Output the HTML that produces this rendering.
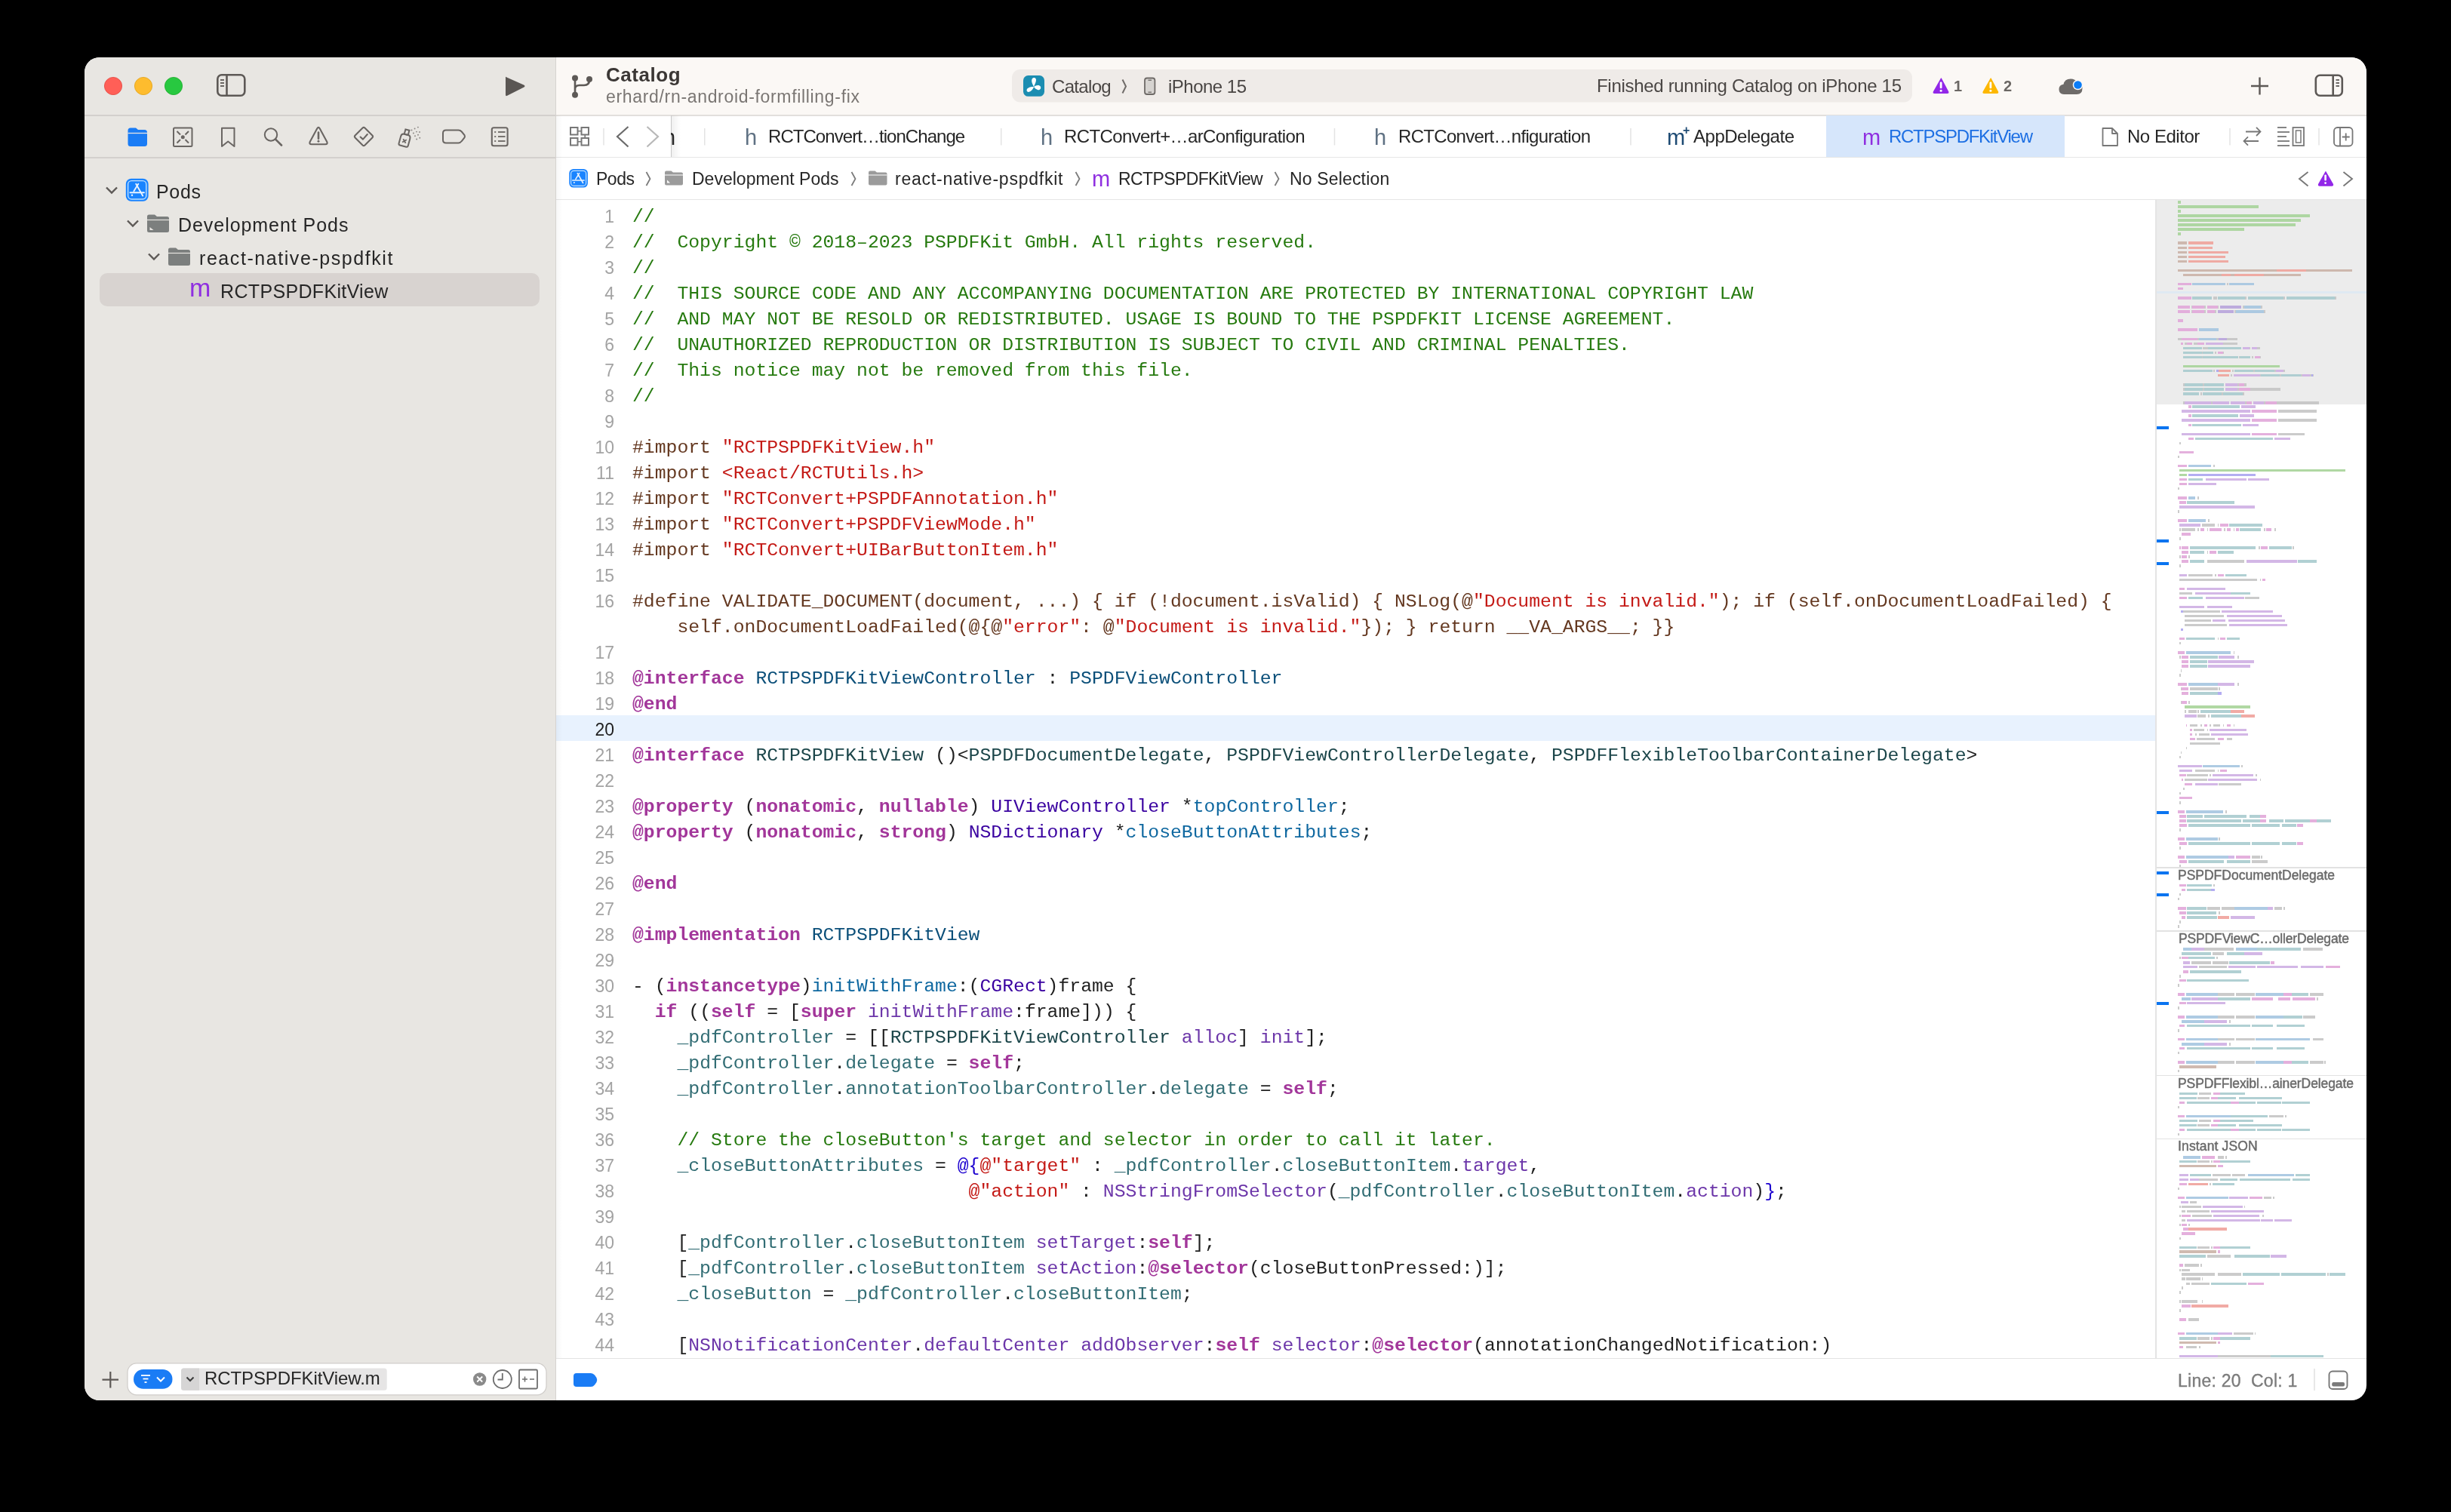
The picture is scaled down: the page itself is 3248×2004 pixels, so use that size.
<!DOCTYPE html>
<html><head><meta charset="utf-8">
<style>
*{margin:0;padding:0;box-sizing:border-box}
html,body{width:3248px;height:2004px;background:#000;overflow:hidden;font-family:"Liberation Sans",sans-serif}
.win{position:absolute;left:112px;top:76px;width:3024px;height:1780px;border-radius:20px;overflow:hidden;background:#fff}
.abs{position:absolute}
.side{position:absolute;left:0;top:0;width:624px;height:1780px;background:#e8e6e2}
.sidesep{position:absolute;left:624px;top:0;width:1px;height:1780px;background:#d6d3d0}
.hsep{position:absolute;height:1px}
.tb{position:absolute;left:625px;top:0;width:2399px;height:76px;background:#fbf8f5}
.t{position:absolute;white-space:pre;line-height:1;will-change:transform}
.cl{position:absolute;left:726px;height:34px;line-height:34px;font-family:"Liberation Mono",monospace;font-size:24.75px;white-space:pre;color:#1f1f1f;will-change:transform}
.ln{position:absolute;left:641.5px;width:60px;text-align:right;height:34px;line-height:34px;font-size:23px;color:#a3a3a3;font-family:"Liberation Sans",sans-serif;will-change:transform}
.ln.cur{color:#1f1f1f}
.c{color:#267a0f}.s{color:#c41a16}.p{color:#643820}.k{color:#a2369a;font-weight:bold}.t_{color:#0b4f79}
.pc{color:#1c464a}.o{color:#3900a0}.d{color:#0f68a0}.pv{color:#326d74}.of{color:#6c36a9}.n{color:#1c00cf}
.mm{position:absolute;left:2744px;top:189px;width:280px;height:1535px;overflow:hidden;background:#fff}
.mm i{position:absolute;height:3.6px;display:block;filter:blur(0.6px);opacity:.9}
.mmh{position:absolute;left:30px;font-size:17.5px;color:#6b6b6b;white-space:pre;line-height:1}
svg{position:absolute;overflow:visible}
</style></head><body>
<div class="win">
  <!-- sidebar -->
  <div class="side"></div>
  <div class="sidesep"></div>
  <!-- editor toolbar bg -->
  <div class="tb"></div>
  <!-- separators -->
  <div class="hsep" style="left:0;top:76px;width:624px;background:#d3d0cd;height:1.5px"></div>
  <div class="hsep" style="left:625px;top:76px;width:2399px;background:#e2dfdc;height:1.5px"></div>
  <div class="hsep" style="left:0;top:132px;width:624px;background:#d3d0cd;height:1.5px"></div>
  <div class="hsep" style="left:625px;top:132px;width:2399px;background:#e6e6e6"></div>
  <div class="hsep" style="left:625px;top:188px;width:2399px;background:#e6e6e6"></div>
  <div class="hsep" style="left:625px;top:1724px;width:2399px;background:#e3e3e3"></div>
<div class="abs" style="left:20.0px;top:286.0px;width:582.7px;height:43.7px;background:#d8d3d0;border-radius:10px"></div>
<div class="abs" style="left:2307.7px;top:77.0px;width:316.0px;height:55.0px;background:#d6e6fb"></div>
<div class="abs" style="left:625.0px;top:872.0px;width:2119.0px;height:34.0px;background:#e8f2fe"></div>
<div class="abs" style="left:777.0px;top:77.0px;width:1.0px;height:55.0px;background:#c9c9c9"></div>
<div class="abs" style="left:625.0px;top:77.0px;width:8.0px;height:1647.0px;background:linear-gradient(to right,rgba(0,0,0,0.035),rgba(0,0,0,0))"></div>
<div class="abs" style="left:778.0px;top:77.0px;width:12.0px;height:55.0px;background:linear-gradient(to right,rgba(0,0,0,0.06),rgba(0,0,0,0))"></div>
<div class="ln" style="top:193.5px">1</div>
<div class="ln" style="top:227.5px">2</div>
<div class="ln" style="top:261.5px">3</div>
<div class="ln" style="top:295.5px">4</div>
<div class="ln" style="top:329.5px">5</div>
<div class="ln" style="top:363.5px">6</div>
<div class="ln" style="top:397.5px">7</div>
<div class="ln" style="top:431.5px">8</div>
<div class="ln" style="top:465.5px">9</div>
<div class="ln" style="top:499.5px">10</div>
<div class="ln" style="top:533.5px">11</div>
<div class="ln" style="top:567.5px">12</div>
<div class="ln" style="top:601.5px">13</div>
<div class="ln" style="top:635.5px">14</div>
<div class="ln" style="top:669.5px">15</div>
<div class="ln" style="top:703.5px">16</div>
<div class="ln" style="top:771.5px">17</div>
<div class="ln" style="top:805.5px">18</div>
<div class="ln" style="top:839.5px">19</div>
<div class="ln cur" style="top:873.5px">20</div>
<div class="ln" style="top:907.5px">21</div>
<div class="ln" style="top:941.5px">22</div>
<div class="ln" style="top:975.5px">23</div>
<div class="ln" style="top:1009.5px">24</div>
<div class="ln" style="top:1043.5px">25</div>
<div class="ln" style="top:1077.5px">26</div>
<div class="ln" style="top:1111.5px">27</div>
<div class="ln" style="top:1145.5px">28</div>
<div class="ln" style="top:1179.5px">29</div>
<div class="ln" style="top:1213.5px">30</div>
<div class="ln" style="top:1247.5px">31</div>
<div class="ln" style="top:1281.5px">32</div>
<div class="ln" style="top:1315.5px">33</div>
<div class="ln" style="top:1349.5px">34</div>
<div class="ln" style="top:1383.5px">35</div>
<div class="ln" style="top:1417.5px">36</div>
<div class="ln" style="top:1451.5px">37</div>
<div class="ln" style="top:1485.5px">38</div>
<div class="ln" style="top:1519.5px">39</div>
<div class="ln" style="top:1553.5px">40</div>
<div class="ln" style="top:1587.5px">41</div>
<div class="ln" style="top:1621.5px">42</div>
<div class="ln" style="top:1655.5px">43</div>
<div class="ln" style="top:1689.5px">44</div>
<div class="cl" style="top:194.0px"><span class="c">//</span></div>
<div class="cl" style="top:228.0px"><span class="c">//  Copyright © 2018–2023 PSPDFKit GmbH. All rights reserved.</span></div>
<div class="cl" style="top:262.0px"><span class="c">//</span></div>
<div class="cl" style="top:296.0px"><span class="c">//  THIS SOURCE CODE AND ANY ACCOMPANYING DOCUMENTATION ARE PROTECTED BY INTERNATIONAL COPYRIGHT LAW</span></div>
<div class="cl" style="top:330.0px"><span class="c">//  AND MAY NOT BE RESOLD OR REDISTRIBUTED. USAGE IS BOUND TO THE PSPDFKIT LICENSE AGREEMENT.</span></div>
<div class="cl" style="top:364.0px"><span class="c">//  UNAUTHORIZED REPRODUCTION OR DISTRIBUTION IS SUBJECT TO CIVIL AND CRIMINAL PENALTIES.</span></div>
<div class="cl" style="top:398.0px"><span class="c">//  This notice may not be removed from this file.</span></div>
<div class="cl" style="top:432.0px"><span class="c">//</span></div>
<div class="cl" style="top:466.0px"></div>
<div class="cl" style="top:500.0px"><span class="p">#import </span><span class="s">&quot;RCTPSPDFKitView.h&quot;</span></div>
<div class="cl" style="top:534.0px"><span class="p">#import </span><span class="s">&lt;React/RCTUtils.h&gt;</span></div>
<div class="cl" style="top:568.0px"><span class="p">#import </span><span class="s">&quot;RCTConvert+PSPDFAnnotation.h&quot;</span></div>
<div class="cl" style="top:602.0px"><span class="p">#import </span><span class="s">&quot;RCTConvert+PSPDFViewMode.h&quot;</span></div>
<div class="cl" style="top:636.0px"><span class="p">#import </span><span class="s">&quot;RCTConvert+UIBarButtonItem.h&quot;</span></div>
<div class="cl" style="top:670.0px"></div>
<div class="cl" style="top:704.0px"><span class="p">#define VALIDATE_DOCUMENT(document, ...) { if (!document.isValid) { NSLog(@</span><span class="s">&quot;Document is invalid.&quot;</span><span class="p">); if (self.onDocumentLoadFailed) {</span></div>
<div class="cl" style="top:738.0px"><span class="p">    self.onDocumentLoadFailed(@{@</span><span class="s">&quot;error&quot;</span><span class="p">: @</span><span class="s">&quot;Document is invalid.&quot;</span><span class="p">}); } return __VA_ARGS__; }}</span></div>
<div class="cl" style="top:772.0px"></div>
<div class="cl" style="top:806.0px"><span class="k">@interface</span> <span class="t_">RCTPSPDFKitViewController</span> : <span class="t_">PSPDFViewController</span></div>
<div class="cl" style="top:840.0px"><span class="k">@end</span></div>
<div class="cl" style="top:874.0px"></div>
<div class="cl" style="top:908.0px"><span class="k">@interface</span> <span class="pc">RCTPSPDFKitView</span> ()&lt;<span class="pc">PSPDFDocumentDelegate</span>, <span class="pc">PSPDFViewControllerDelegate</span>, <span class="pc">PSPDFFlexibleToolbarContainerDelegate</span>&gt;</div>
<div class="cl" style="top:942.0px"></div>
<div class="cl" style="top:976.0px"><span class="k">@property</span> (<span class="k">nonatomic</span>, <span class="k">nullable</span>) <span class="o">UIViewController</span> *<span class="d">topController</span>;</div>
<div class="cl" style="top:1010.0px"><span class="k">@property</span> (<span class="k">nonatomic</span>, <span class="k">strong</span>) <span class="o">NSDictionary</span> *<span class="d">closeButtonAttributes</span>;</div>
<div class="cl" style="top:1044.0px"></div>
<div class="cl" style="top:1078.0px"><span class="k">@end</span></div>
<div class="cl" style="top:1112.0px"></div>
<div class="cl" style="top:1146.0px"><span class="k">@implementation</span> <span class="t_">RCTPSPDFKitView</span></div>
<div class="cl" style="top:1180.0px"></div>
<div class="cl" style="top:1214.0px">- (<span class="k">instancetype</span>)<span class="d">initWithFrame</span>:(<span class="o">CGRect</span>)frame {</div>
<div class="cl" style="top:1248.0px">  <span class="k">if</span> ((<span class="k">self</span> = [<span class="k">super</span> <span class="of">initWithFrame</span>:frame])) {</div>
<div class="cl" style="top:1282.0px">    <span class="pv">_pdfController</span> = [[<span class="pc">RCTPSPDFKitViewController</span> <span class="of">alloc</span>] <span class="of">init</span>];</div>
<div class="cl" style="top:1316.0px">    <span class="pv">_pdfController</span>.<span class="pv">delegate</span> = <span class="k">self</span>;</div>
<div class="cl" style="top:1350.0px">    <span class="pv">_pdfController</span>.<span class="pv">annotationToolbarController</span>.<span class="pv">delegate</span> = <span class="k">self</span>;</div>
<div class="cl" style="top:1384.0px"></div>
<div class="cl" style="top:1418.0px">    <span class="c">// Store the closeButton&#x27;s target and selector in order to call it later.</span></div>
<div class="cl" style="top:1452.0px">    <span class="pv">_closeButtonAttributes</span> = <span class="n">@{</span><span class="s">@&quot;target&quot;</span> : <span class="pv">_pdfController</span>.<span class="pv">closeButtonItem</span>.<span class="of">target</span>,</div>
<div class="cl" style="top:1486.0px">                              <span class="s">@&quot;action&quot;</span> : <span class="of">NSStringFromSelector</span>(<span class="pv">_pdfController</span>.<span class="pv">closeButtonItem</span>.<span class="of">action</span>)<span class="n">}</span>;</div>
<div class="cl" style="top:1520.0px"></div>
<div class="cl" style="top:1554.0px">    [<span class="pv">_pdfController</span>.<span class="pv">closeButtonItem</span> <span class="of">setTarget</span>:<span class="k">self</span>];</div>
<div class="cl" style="top:1588.0px">    [<span class="pv">_pdfController</span>.<span class="pv">closeButtonItem</span> <span class="of">setAction</span>:<span class="k">@selector</span>(closeButtonPressed:)];</div>
<div class="cl" style="top:1622.0px">    <span class="pv">_closeButton</span> = <span class="pv">_pdfController</span>.<span class="pv">closeButtonItem</span>;</div>
<div class="cl" style="top:1656.0px"></div>
<div class="cl" style="top:1690.0px">    [<span class="of">NSNotificationCenter</span>.<span class="of">defaultCenter</span> <span class="of">addObserver</span>:<span class="k">self</span> <span class="of">selector</span>:<span class="k">@selector</span>(annotationChangedNotification:)</div>
<div class="t" style="left:874.5px;top:91.5px;font-size:29px;color:#5f7183;font-weight:400">h</div>
<div class="t" style="left:1266.5px;top:91.5px;font-size:29px;color:#5f7183;font-weight:400">h</div>
<div class="t" style="left:1708.5px;top:91.5px;font-size:29px;color:#5f7183;font-weight:400">h</div>
<div class="t" style="left:2097.0px;top:91.5px;font-size:29px;color:#1d4a73;font-weight:400">m</div>
<div class="t" style="left:2118.0px;top:88.5px;font-size:16px;color:#1d4a73;font-weight:700">+</div>
<div class="t" style="left:2355.5px;top:91.5px;font-size:29px;color:#8f2fe0;font-weight:400">m</div>
<div class="t" style="left:1334.5px;top:146.5px;font-size:29px;color:#8f2fe0;font-weight:400">m</div>
<div class="t" style="left:139.0px;top:287.7px;font-size:34px;color:#8f2fe0;font-weight:400">m</div>
<div class="abs" style="left:777px;top:89px;width:5px;height:30px;overflow:hidden"><div class="t" style="left:-10px;top:3px;font-size:29px;color:#262626">h</div></div>
<div class="mm">
<div class="abs" style="left:0;top:0;width:2px;height:1535px;background:#e4e4e4"></div>
<div class="abs" style="left:2px;top:0;width:278px;height:271px;background:#ececec"></div>
<div class="abs" style="left:2px;top:121px;width:278px;height:3px;background:#dfe9f2"></div>
<i style="left:30.0px;top:1.0px;width:3.5px;background:#a8d49a"></i>
<i style="left:30.0px;top:7.1px;width:106.8px;background:#a8d49a"></i>
<i style="left:30.0px;top:13.1px;width:3.5px;background:#a8d49a"></i>
<i style="left:30.0px;top:19.1px;width:175.0px;background:#a8d49a"></i>
<i style="left:30.0px;top:25.2px;width:162.8px;background:#a8d49a"></i>
<i style="left:30.0px;top:31.2px;width:155.8px;background:#a8d49a"></i>
<i style="left:30.0px;top:37.3px;width:87.5px;background:#a8d49a"></i>
<i style="left:30.0px;top:43.4px;width:3.5px;background:#a8d49a"></i>
<i style="left:30.0px;top:55.4px;width:12.2px;background:#cbb3a8"></i>
<i style="left:44.0px;top:55.4px;width:33.2px;background:#f0a39c"></i>
<i style="left:30.0px;top:61.5px;width:12.2px;background:#cbb3a8"></i>
<i style="left:44.0px;top:61.5px;width:31.5px;background:#f0a39c"></i>
<i style="left:30.0px;top:67.6px;width:12.2px;background:#cbb3a8"></i>
<i style="left:44.0px;top:67.6px;width:52.5px;background:#f0a39c"></i>
<i style="left:30.0px;top:73.6px;width:12.2px;background:#cbb3a8"></i>
<i style="left:44.0px;top:73.6px;width:49.0px;background:#f0a39c"></i>
<i style="left:30.0px;top:79.6px;width:12.2px;background:#cbb3a8"></i>
<i style="left:44.0px;top:79.6px;width:52.5px;background:#f0a39c"></i>
<i style="left:30.0px;top:91.8px;width:131.2px;background:#cbb3a8"></i>
<i style="left:161.2px;top:91.8px;width:38.5px;background:#f0a39c"></i>
<i style="left:199.8px;top:91.8px;width:61.2px;background:#cbb3a8"></i>
<i style="left:37.0px;top:97.8px;width:50.8px;background:#cbb3a8"></i>
<i style="left:87.8px;top:97.8px;width:12.2px;background:#f0a39c"></i>
<i style="left:100.0px;top:97.8px;width:5.2px;background:#cbb3a8"></i>
<i style="left:105.2px;top:97.8px;width:38.5px;background:#f0a39c"></i>
<i style="left:143.8px;top:97.8px;width:49.0px;background:#cbb3a8"></i>
<i style="left:30.0px;top:109.9px;width:17.5px;background:#e2a8da"></i>
<i style="left:49.2px;top:109.9px;width:43.8px;background:#a6c6e0"></i>
<i style="left:94.8px;top:109.9px;width:1.8px;background:#c6c6c6"></i>
<i style="left:98.2px;top:109.9px;width:33.2px;background:#a6c6e0"></i>
<i style="left:30.0px;top:115.9px;width:7.0px;background:#e2a8da"></i>
<i style="left:30.0px;top:128.1px;width:17.5px;background:#e2a8da"></i>
<i style="left:49.2px;top:128.1px;width:26.2px;background:#a9cbcf"></i>
<i style="left:77.2px;top:128.1px;width:5.2px;background:#c6c6c6"></i>
<i style="left:82.5px;top:128.1px;width:36.8px;background:#a9cbcf"></i>
<i style="left:119.2px;top:128.1px;width:1.8px;background:#c6c6c6"></i>
<i style="left:122.8px;top:128.1px;width:47.2px;background:#a9cbcf"></i>
<i style="left:170.0px;top:128.1px;width:1.8px;background:#c6c6c6"></i>
<i style="left:173.5px;top:128.1px;width:64.8px;background:#a9cbcf"></i>
<i style="left:238.2px;top:128.1px;width:1.8px;background:#c6c6c6"></i>
<i style="left:30.0px;top:140.1px;width:15.8px;background:#e2a8da"></i>
<i style="left:47.5px;top:140.1px;width:1.8px;background:#c6c6c6"></i>
<i style="left:49.2px;top:140.1px;width:15.8px;background:#e2a8da"></i>
<i style="left:65.0px;top:140.1px;width:1.8px;background:#c6c6c6"></i>
<i style="left:68.5px;top:140.1px;width:14.0px;background:#e2a8da"></i>
<i style="left:82.5px;top:140.1px;width:1.8px;background:#c6c6c6"></i>
<i style="left:86.0px;top:140.1px;width:28.0px;background:#b9a5dc"></i>
<i style="left:115.8px;top:140.1px;width:1.8px;background:#c6c6c6"></i>
<i style="left:117.5px;top:140.1px;width:22.8px;background:#a6c6e0"></i>
<i style="left:140.2px;top:140.1px;width:1.8px;background:#c6c6c6"></i>
<i style="left:30.0px;top:146.2px;width:15.8px;background:#e2a8da"></i>
<i style="left:47.5px;top:146.2px;width:1.8px;background:#c6c6c6"></i>
<i style="left:49.2px;top:146.2px;width:15.8px;background:#e2a8da"></i>
<i style="left:65.0px;top:146.2px;width:1.8px;background:#c6c6c6"></i>
<i style="left:68.5px;top:146.2px;width:10.5px;background:#e2a8da"></i>
<i style="left:79.0px;top:146.2px;width:1.8px;background:#c6c6c6"></i>
<i style="left:82.5px;top:146.2px;width:21.0px;background:#b9a5dc"></i>
<i style="left:105.2px;top:146.2px;width:1.8px;background:#c6c6c6"></i>
<i style="left:107.0px;top:146.2px;width:36.8px;background:#a6c6e0"></i>
<i style="left:143.8px;top:146.2px;width:1.8px;background:#c6c6c6"></i>
<i style="left:30.0px;top:158.3px;width:7.0px;background:#e2a8da"></i>
<i style="left:30.0px;top:170.4px;width:26.2px;background:#e2a8da"></i>
<i style="left:58.0px;top:170.4px;width:26.2px;background:#a6c6e0"></i>
<i style="left:30.0px;top:182.5px;width:5.2px;background:#c6c6c6"></i>
<i style="left:35.2px;top:182.5px;width:21.0px;background:#e2a8da"></i>
<i style="left:56.2px;top:182.5px;width:1.8px;background:#c6c6c6"></i>
<i style="left:58.0px;top:182.5px;width:22.8px;background:#a6c6e0"></i>
<i style="left:80.8px;top:182.5px;width:3.5px;background:#c6c6c6"></i>
<i style="left:84.2px;top:182.5px;width:10.5px;background:#b9a5dc"></i>
<i style="left:94.8px;top:182.5px;width:14.0px;background:#c6c6c6"></i>
<i style="left:33.5px;top:188.5px;width:3.5px;background:#e2a8da"></i>
<i style="left:38.8px;top:188.5px;width:3.5px;background:#c6c6c6"></i>
<i style="left:42.2px;top:188.5px;width:7.0px;background:#e2a8da"></i>
<i style="left:51.0px;top:188.5px;width:5.2px;background:#c6c6c6"></i>
<i style="left:56.2px;top:188.5px;width:8.8px;background:#e2a8da"></i>
<i style="left:66.8px;top:188.5px;width:22.8px;background:#cfb0e4"></i>
<i style="left:89.5px;top:188.5px;width:19.2px;background:#c6c6c6"></i>
<i style="left:37.0px;top:194.6px;width:24.5px;background:#a9cbcf"></i>
<i style="left:63.2px;top:194.6px;width:7.0px;background:#c6c6c6"></i>
<i style="left:70.2px;top:194.6px;width:43.8px;background:#a9cbcf"></i>
<i style="left:115.8px;top:194.6px;width:8.8px;background:#cfb0e4"></i>
<i style="left:124.5px;top:194.6px;width:1.8px;background:#c6c6c6"></i>
<i style="left:128.0px;top:194.6px;width:7.0px;background:#cfb0e4"></i>
<i style="left:135.0px;top:194.6px;width:3.5px;background:#c6c6c6"></i>
<i style="left:37.0px;top:200.6px;width:24.5px;background:#a9cbcf"></i>
<i style="left:61.5px;top:200.6px;width:1.8px;background:#c6c6c6"></i>
<i style="left:63.2px;top:200.6px;width:14.0px;background:#a9cbcf"></i>
<i style="left:79.0px;top:200.6px;width:1.8px;background:#c6c6c6"></i>
<i style="left:82.5px;top:200.6px;width:7.0px;background:#e2a8da"></i>
<i style="left:89.5px;top:200.6px;width:1.8px;background:#c6c6c6"></i>
<i style="left:37.0px;top:206.7px;width:24.5px;background:#a9cbcf"></i>
<i style="left:61.5px;top:206.7px;width:1.8px;background:#c6c6c6"></i>
<i style="left:63.2px;top:206.7px;width:47.2px;background:#a9cbcf"></i>
<i style="left:110.5px;top:206.7px;width:1.8px;background:#c6c6c6"></i>
<i style="left:112.2px;top:206.7px;width:14.0px;background:#a9cbcf"></i>
<i style="left:128.0px;top:206.7px;width:1.8px;background:#c6c6c6"></i>
<i style="left:131.5px;top:206.7px;width:7.0px;background:#e2a8da"></i>
<i style="left:138.5px;top:206.7px;width:1.8px;background:#c6c6c6"></i>
<i style="left:37.0px;top:218.8px;width:127.8px;background:#a8d49a"></i>
<i style="left:37.0px;top:224.9px;width:38.5px;background:#a9cbcf"></i>
<i style="left:77.2px;top:224.9px;width:1.8px;background:#c6c6c6"></i>
<i style="left:80.8px;top:224.9px;width:3.5px;background:#aba5f0"></i>
<i style="left:84.2px;top:224.9px;width:15.8px;background:#f0a39c"></i>
<i style="left:101.8px;top:224.9px;width:1.8px;background:#c6c6c6"></i>
<i style="left:105.2px;top:224.9px;width:24.5px;background:#a9cbcf"></i>
<i style="left:129.8px;top:224.9px;width:1.8px;background:#c6c6c6"></i>
<i style="left:131.5px;top:224.9px;width:26.2px;background:#a9cbcf"></i>
<i style="left:157.8px;top:224.9px;width:1.8px;background:#c6c6c6"></i>
<i style="left:159.5px;top:224.9px;width:10.5px;background:#cfb0e4"></i>
<i style="left:170.0px;top:224.9px;width:1.8px;background:#c6c6c6"></i>
<i style="left:82.5px;top:230.9px;width:15.8px;background:#f0a39c"></i>
<i style="left:100.0px;top:230.9px;width:1.8px;background:#c6c6c6"></i>
<i style="left:103.5px;top:230.9px;width:35.0px;background:#cfb0e4"></i>
<i style="left:138.5px;top:230.9px;width:1.8px;background:#c6c6c6"></i>
<i style="left:140.2px;top:230.9px;width:24.5px;background:#a9cbcf"></i>
<i style="left:164.8px;top:230.9px;width:1.8px;background:#c6c6c6"></i>
<i style="left:166.5px;top:230.9px;width:26.2px;background:#a9cbcf"></i>
<i style="left:192.8px;top:230.9px;width:1.8px;background:#c6c6c6"></i>
<i style="left:194.5px;top:230.9px;width:10.5px;background:#cfb0e4"></i>
<i style="left:205.0px;top:230.9px;width:1.8px;background:#c6c6c6"></i>
<i style="left:206.8px;top:230.9px;width:1.8px;background:#aba5f0"></i>
<i style="left:208.5px;top:230.9px;width:1.8px;background:#c6c6c6"></i>
<i style="left:37.0px;top:243.0px;width:1.8px;background:#c6c6c6"></i>
<i style="left:38.8px;top:243.0px;width:24.5px;background:#a9cbcf"></i>
<i style="left:63.2px;top:243.0px;width:1.8px;background:#c6c6c6"></i>
<i style="left:65.0px;top:243.0px;width:26.2px;background:#a9cbcf"></i>
<i style="left:93.0px;top:243.0px;width:15.8px;background:#cfb0e4"></i>
<i style="left:108.8px;top:243.0px;width:1.8px;background:#c6c6c6"></i>
<i style="left:110.5px;top:243.0px;width:7.0px;background:#e2a8da"></i>
<i style="left:117.5px;top:243.0px;width:3.5px;background:#c6c6c6"></i>
<i style="left:37.0px;top:249.0px;width:1.8px;background:#c6c6c6"></i>
<i style="left:38.8px;top:249.0px;width:24.5px;background:#a9cbcf"></i>
<i style="left:63.2px;top:249.0px;width:1.8px;background:#c6c6c6"></i>
<i style="left:65.0px;top:249.0px;width:26.2px;background:#a9cbcf"></i>
<i style="left:93.0px;top:249.0px;width:15.8px;background:#cfb0e4"></i>
<i style="left:108.8px;top:249.0px;width:1.8px;background:#c6c6c6"></i>
<i style="left:110.5px;top:249.0px;width:15.8px;background:#e2a8da"></i>
<i style="left:126.2px;top:249.0px;width:40.2px;background:#c6c6c6"></i>
<i style="left:37.0px;top:255.1px;width:21.0px;background:#a9cbcf"></i>
<i style="left:59.8px;top:255.1px;width:1.8px;background:#c6c6c6"></i>
<i style="left:63.2px;top:255.1px;width:24.5px;background:#a9cbcf"></i>
<i style="left:87.8px;top:255.1px;width:1.8px;background:#c6c6c6"></i>
<i style="left:89.5px;top:255.1px;width:26.2px;background:#a9cbcf"></i>
<i style="left:115.8px;top:255.1px;width:1.8px;background:#c6c6c6"></i>
<i style="left:37.0px;top:267.2px;width:1.8px;background:#c6c6c6"></i>
<i style="left:38.8px;top:267.2px;width:35.0px;background:#cfb0e4"></i>
<i style="left:73.8px;top:267.2px;width:1.8px;background:#c6c6c6"></i>
<i style="left:75.5px;top:267.2px;width:22.8px;background:#cfb0e4"></i>
<i style="left:100.0px;top:267.2px;width:19.2px;background:#cfb0e4"></i>
<i style="left:119.2px;top:267.2px;width:1.8px;background:#c6c6c6"></i>
<i style="left:121.0px;top:267.2px;width:7.0px;background:#e2a8da"></i>
<i style="left:129.8px;top:267.2px;width:14.0px;background:#cfb0e4"></i>
<i style="left:143.8px;top:267.2px;width:1.8px;background:#c6c6c6"></i>
<i style="left:145.5px;top:267.2px;width:15.8px;background:#e2a8da"></i>
<i style="left:161.2px;top:267.2px;width:56.0px;background:#c6c6c6"></i>
<i style="left:44.0px;top:272.4px;width:3.5px;background:#e2a8da"></i>
<i style="left:49.2px;top:272.4px;width:63.0px;background:#a9cbcf"></i>
<i style="left:114.0px;top:272.4px;width:19.2px;background:#cfb0e4"></i>
<i style="left:35.2px;top:278.4px;width:91.0px;background:#cfb0e4"></i>
<i style="left:128.0px;top:278.4px;width:33.2px;background:#e2a8da"></i>
<i style="left:163.0px;top:278.4px;width:50.8px;background:#c6c6c6"></i>
<i style="left:44.0px;top:284.4px;width:3.5px;background:#e2a8da"></i>
<i style="left:49.2px;top:284.4px;width:61.2px;background:#a9cbcf"></i>
<i style="left:112.2px;top:284.4px;width:19.2px;background:#cfb0e4"></i>
<i style="left:35.2px;top:290.4px;width:91.0px;background:#cfb0e4"></i>
<i style="left:128.0px;top:290.4px;width:33.2px;background:#e2a8da"></i>
<i style="left:163.0px;top:290.4px;width:50.8px;background:#c6c6c6"></i>
<i style="left:44.0px;top:296.5px;width:3.5px;background:#e2a8da"></i>
<i style="left:49.2px;top:296.5px;width:64.8px;background:#a9cbcf"></i>
<i style="left:115.8px;top:296.5px;width:21.0px;background:#cfb0e4"></i>
<i style="left:35.2px;top:308.5px;width:91.0px;background:#cfb0e4"></i>
<i style="left:128.0px;top:308.5px;width:33.2px;background:#e2a8da"></i>
<i style="left:163.0px;top:308.5px;width:35.0px;background:#c6c6c6"></i>
<i style="left:44.0px;top:314.6px;width:7.0px;background:#e2a8da"></i>
<i style="left:52.8px;top:314.6px;width:103.2px;background:#a9cbcf"></i>
<i style="left:157.8px;top:314.6px;width:21.0px;background:#cfb0e4"></i>
<i style="left:31.8px;top:320.6px;width:1.8px;background:#c6c6c6"></i>
<i style="left:31.8px;top:332.7px;width:19.2px;background:#e2a8da"></i>
<i style="left:30.0px;top:338.7px;width:1.8px;background:#c6c6c6"></i>
<i style="left:30.0px;top:350.7px;width:12.2px;background:#e2a8da"></i>
<i style="left:44.0px;top:350.7px;width:29.8px;background:#a6c6e0"></i>
<i style="left:77.2px;top:350.7px;width:1.8px;background:#c6c6c6"></i>
<i style="left:31.8px;top:356.8px;width:220.5px;background:#a8d49a"></i>
<i style="left:31.8px;top:362.8px;width:10.5px;background:#a8d49a"></i>
<i style="left:44.0px;top:362.8px;width:89.2px;background:#aba5f0"></i>
<i style="left:31.8px;top:368.8px;width:10.5px;background:#e2a8da"></i>
<i style="left:44.0px;top:368.8px;width:19.2px;background:#a9cbcf"></i>
<i style="left:66.8px;top:368.8px;width:54.2px;background:#cfb0e4"></i>
<i style="left:122.8px;top:368.8px;width:28.0px;background:#cfb0e4"></i>
<i style="left:31.8px;top:374.9px;width:10.5px;background:#e2a8da"></i>
<i style="left:44.0px;top:374.9px;width:36.8px;background:#cfb0e4"></i>
<i style="left:30.0px;top:380.9px;width:1.8px;background:#c6c6c6"></i>
<i style="left:30.0px;top:393.0px;width:12.2px;background:#e2a8da"></i>
<i style="left:44.0px;top:393.0px;width:8.8px;background:#a6c6e0"></i>
<i style="left:56.2px;top:393.0px;width:1.8px;background:#c6c6c6"></i>
<i style="left:31.8px;top:399.0px;width:8.8px;background:#e2a8da"></i>
<i style="left:42.2px;top:399.0px;width:63.0px;background:#a9cbcf"></i>
<i style="left:31.8px;top:405.0px;width:99.8px;background:#cfb0e4"></i>
<i style="left:30.0px;top:411.0px;width:1.8px;background:#c6c6c6"></i>
<i style="left:30.0px;top:423.1px;width:12.2px;background:#e2a8da"></i>
<i style="left:44.0px;top:423.1px;width:22.8px;background:#a6c6e0"></i>
<i style="left:70.2px;top:423.1px;width:1.8px;background:#c6c6c6"></i>
<i style="left:31.8px;top:429.1px;width:28.0px;background:#cfb0e4"></i>
<i style="left:61.5px;top:429.1px;width:17.5px;background:#c6c6c6"></i>
<i style="left:82.5px;top:429.1px;width:1.8px;background:#c6c6c6"></i>
<i style="left:86.0px;top:429.1px;width:10.5px;background:#e2a8da"></i>
<i style="left:98.2px;top:429.1px;width:43.8px;background:#a9cbcf"></i>
<i style="left:31.8px;top:435.2px;width:1.8px;background:#c6c6c6"></i>
<i style="left:35.2px;top:435.2px;width:17.5px;background:#c6c6c6"></i>
<i style="left:56.2px;top:435.2px;width:1.8px;background:#c6c6c6"></i>
<i style="left:59.8px;top:435.2px;width:5.2px;background:#e2a8da"></i>
<i style="left:68.5px;top:435.2px;width:1.8px;background:#c6c6c6"></i>
<i style="left:72.0px;top:435.2px;width:15.8px;background:#e2a8da"></i>
<i style="left:91.2px;top:435.2px;width:1.8px;background:#c6c6c6"></i>
<i style="left:94.8px;top:435.2px;width:5.2px;background:#e2a8da"></i>
<i style="left:103.5px;top:435.2px;width:1.8px;background:#c6c6c6"></i>
<i style="left:107.0px;top:435.2px;width:3.5px;background:#e2a8da"></i>
<i style="left:112.2px;top:435.2px;width:28.0px;background:#a9cbcf"></i>
<i style="left:143.8px;top:435.2px;width:1.8px;background:#c6c6c6"></i>
<i style="left:147.2px;top:435.2px;width:7.0px;background:#e2a8da"></i>
<i style="left:157.8px;top:435.2px;width:1.8px;background:#c6c6c6"></i>
<i style="left:35.2px;top:441.2px;width:12.2px;background:#e2a8da"></i>
<i style="left:31.8px;top:447.2px;width:1.8px;background:#c6c6c6"></i>
<i style="left:31.8px;top:459.3px;width:1.8px;background:#e2a8da"></i>
<i style="left:35.2px;top:459.3px;width:8.8px;background:#e2a8da"></i>
<i style="left:45.8px;top:459.3px;width:87.5px;background:#a9cbcf"></i>
<i style="left:136.8px;top:459.3px;width:1.8px;background:#c6c6c6"></i>
<i style="left:140.2px;top:459.3px;width:8.8px;background:#e2a8da"></i>
<i style="left:150.8px;top:459.3px;width:29.8px;background:#a9cbcf"></i>
<i style="left:182.2px;top:459.3px;width:1.8px;background:#c6c6c6"></i>
<i style="left:35.2px;top:465.3px;width:8.8px;background:#e2a8da"></i>
<i style="left:45.8px;top:465.3px;width:19.2px;background:#a9cbcf"></i>
<i style="left:68.5px;top:465.3px;width:1.8px;background:#c6c6c6"></i>
<i style="left:72.0px;top:465.3px;width:8.8px;background:#e2a8da"></i>
<i style="left:82.5px;top:465.3px;width:21.0px;background:#a9cbcf"></i>
<i style="left:31.8px;top:471.3px;width:1.8px;background:#c6c6c6"></i>
<i style="left:35.2px;top:471.3px;width:7.0px;background:#e2a8da"></i>
<i style="left:44.0px;top:471.3px;width:1.8px;background:#c6c6c6"></i>
<i style="left:35.2px;top:477.4px;width:8.8px;background:#e2a8da"></i>
<i style="left:45.8px;top:477.4px;width:19.2px;background:#a9cbcf"></i>
<i style="left:68.5px;top:477.4px;width:49.0px;background:#c6c6c6"></i>
<i style="left:121.0px;top:477.4px;width:66.5px;background:#cfb0e4"></i>
<i style="left:189.2px;top:477.4px;width:24.5px;background:#a9cbcf"></i>
<i style="left:31.8px;top:483.4px;width:1.8px;background:#c6c6c6"></i>
<i style="left:31.8px;top:495.5px;width:10.5px;background:#cfb0e4"></i>
<i style="left:44.0px;top:495.5px;width:31.5px;background:#c6c6c6"></i>
<i style="left:79.0px;top:495.5px;width:1.8px;background:#c6c6c6"></i>
<i style="left:82.5px;top:495.5px;width:8.8px;background:#e2a8da"></i>
<i style="left:93.0px;top:495.5px;width:28.0px;background:#a9cbcf"></i>
<i style="left:31.8px;top:501.5px;width:103.2px;background:#c6c6c6"></i>
<i style="left:138.5px;top:501.5px;width:1.8px;background:#c6c6c6"></i>
<i style="left:142.0px;top:501.5px;width:3.5px;background:#e2a8da"></i>
<i style="left:31.8px;top:513.6px;width:7.0px;background:#e2a8da"></i>
<i style="left:42.2px;top:513.6px;width:50.8px;background:#cfb0e4"></i>
<i style="left:31.8px;top:519.6px;width:17.5px;background:#c6c6c6"></i>
<i style="left:52.8px;top:519.6px;width:47.2px;background:#cfb0e4"></i>
<i style="left:100.0px;top:519.6px;width:26.2px;background:#a9cbcf"></i>
<i style="left:31.8px;top:525.6px;width:10.5px;background:#e2a8da"></i>
<i style="left:44.0px;top:525.6px;width:19.2px;background:#a9cbcf"></i>
<i style="left:66.8px;top:525.6px;width:50.8px;background:#cfb0e4"></i>
<i style="left:119.2px;top:525.6px;width:19.2px;background:#c6c6c6"></i>
<i style="left:31.8px;top:537.7px;width:33.2px;background:#cfb0e4"></i>
<i style="left:68.5px;top:537.7px;width:33.2px;background:#cfb0e4"></i>
<i style="left:33.5px;top:543.7px;width:3.5px;background:#aba5f0"></i>
<i style="left:37.0px;top:543.7px;width:49.0px;background:#c6c6c6"></i>
<i style="left:87.8px;top:543.7px;width:68.2px;background:#cfb0e4"></i>
<i style="left:38.8px;top:549.7px;width:52.5px;background:#c6c6c6"></i>
<i style="left:94.8px;top:549.7px;width:73.5px;background:#cfb0e4"></i>
<i style="left:38.8px;top:555.8px;width:35.0px;background:#c6c6c6"></i>
<i style="left:75.5px;top:555.8px;width:17.5px;background:#cfb0e4"></i>
<i style="left:96.5px;top:555.8px;width:75.2px;background:#cfb0e4"></i>
<i style="left:38.8px;top:561.8px;width:56.0px;background:#c6c6c6"></i>
<i style="left:98.2px;top:561.8px;width:77.0px;background:#cfb0e4"></i>
<i style="left:33.5px;top:567.8px;width:3.5px;background:#aba5f0"></i>
<i style="left:31.8px;top:579.9px;width:7.0px;background:#e2a8da"></i>
<i style="left:40.5px;top:579.9px;width:38.5px;background:#a9cbcf"></i>
<i style="left:82.5px;top:579.9px;width:1.8px;background:#c6c6c6"></i>
<i style="left:86.0px;top:579.9px;width:7.0px;background:#e2a8da"></i>
<i style="left:94.8px;top:579.9px;width:17.5px;background:#a9cbcf"></i>
<i style="left:31.8px;top:585.9px;width:1.8px;background:#c6c6c6"></i>
<i style="left:30.0px;top:598.0px;width:8.8px;background:#e2a8da"></i>
<i style="left:40.5px;top:598.0px;width:59.5px;background:#a6c6e0"></i>
<i style="left:103.5px;top:598.0px;width:1.8px;background:#c6c6c6"></i>
<i style="left:31.8px;top:604.0px;width:1.8px;background:#c6c6c6"></i>
<i style="left:35.2px;top:604.0px;width:8.8px;background:#e2a8da"></i>
<i style="left:45.8px;top:604.0px;width:36.8px;background:#a9cbcf"></i>
<i style="left:84.2px;top:604.0px;width:21.0px;background:#cfb0e4"></i>
<i style="left:108.8px;top:604.0px;width:1.8px;background:#c6c6c6"></i>
<i style="left:35.2px;top:610.0px;width:8.8px;background:#e2a8da"></i>
<i style="left:45.8px;top:610.0px;width:22.8px;background:#a9cbcf"></i>
<i style="left:70.2px;top:610.0px;width:61.2px;background:#cfb0e4"></i>
<i style="left:35.2px;top:616.1px;width:8.8px;background:#e2a8da"></i>
<i style="left:45.8px;top:616.1px;width:22.8px;background:#a9cbcf"></i>
<i style="left:70.2px;top:616.1px;width:56.0px;background:#cfb0e4"></i>
<i style="left:33.5px;top:622.1px;width:1.8px;background:#c6c6c6"></i>
<i style="left:31.8px;top:628.1px;width:1.8px;background:#c6c6c6"></i>
<i style="left:30.0px;top:640.2px;width:12.2px;background:#e2a8da"></i>
<i style="left:44.0px;top:640.2px;width:38.5px;background:#a6c6e0"></i>
<i style="left:82.5px;top:640.2px;width:22.8px;background:#cfb0e4"></i>
<i style="left:108.8px;top:640.2px;width:1.8px;background:#c6c6c6"></i>
<i style="left:33.5px;top:646.2px;width:1.8px;background:#c6c6c6"></i>
<i style="left:35.2px;top:646.2px;width:8.8px;background:#e2a8da"></i>
<i style="left:45.8px;top:646.2px;width:36.8px;background:#c6c6c6"></i>
<i style="left:84.2px;top:646.2px;width:1.8px;background:#c6c6c6"></i>
<i style="left:35.2px;top:652.2px;width:8.8px;background:#e2a8da"></i>
<i style="left:45.8px;top:652.2px;width:36.8px;background:#a9cbcf"></i>
<i style="left:82.5px;top:652.2px;width:5.2px;background:#aba5f0"></i>
<i style="left:33.5px;top:664.3px;width:1.8px;background:#c6c6c6"></i>
<i style="left:35.2px;top:664.3px;width:7.0px;background:#e2a8da"></i>
<i style="left:44.0px;top:664.3px;width:1.8px;background:#c6c6c6"></i>
<i style="left:38.8px;top:670.3px;width:87.5px;background:#a8d49a"></i>
<i style="left:38.8px;top:676.4px;width:1.8px;background:#c6c6c6"></i>
<i style="left:44.0px;top:676.4px;width:10.5px;background:#c6c6c6"></i>
<i style="left:56.2px;top:676.4px;width:1.8px;background:#c6c6c6"></i>
<i style="left:59.8px;top:676.4px;width:40.2px;background:#a9cbcf"></i>
<i style="left:100.0px;top:676.4px;width:17.5px;background:#f0a39c"></i>
<i style="left:38.8px;top:682.4px;width:15.8px;background:#cfb0e4"></i>
<i style="left:56.2px;top:682.4px;width:10.5px;background:#c6c6c6"></i>
<i style="left:70.2px;top:682.4px;width:1.8px;background:#c6c6c6"></i>
<i style="left:73.8px;top:682.4px;width:40.2px;background:#a9cbcf"></i>
<i style="left:114.0px;top:682.4px;width:17.5px;background:#f0a39c"></i>
<i style="left:40.5px;top:694.5px;width:1.8px;background:#e2a8da"></i>
<i style="left:45.8px;top:694.5px;width:10.5px;background:#c6c6c6"></i>
<i style="left:59.8px;top:694.5px;width:1.8px;background:#c6c6c6"></i>
<i style="left:65.0px;top:694.5px;width:3.5px;background:#e2a8da"></i>
<i style="left:72.0px;top:694.5px;width:1.8px;background:#c6c6c6"></i>
<i style="left:77.2px;top:694.5px;width:8.8px;background:#c6c6c6"></i>
<i style="left:89.5px;top:694.5px;width:1.8px;background:#c6c6c6"></i>
<i style="left:94.8px;top:694.5px;width:5.2px;background:#e2a8da"></i>
<i style="left:103.5px;top:694.5px;width:1.8px;background:#c6c6c6"></i>
<i style="left:45.8px;top:700.5px;width:3.5px;background:#e2a8da"></i>
<i style="left:51.0px;top:700.5px;width:14.0px;background:#c6c6c6"></i>
<i style="left:68.5px;top:700.5px;width:1.8px;background:#c6c6c6"></i>
<i style="left:72.0px;top:700.5px;width:49.0px;background:#cfb0e4"></i>
<i style="left:45.8px;top:706.5px;width:3.5px;background:#e2a8da"></i>
<i style="left:52.8px;top:706.5px;width:1.8px;background:#c6c6c6"></i>
<i style="left:58.0px;top:706.5px;width:14.0px;background:#c6c6c6"></i>
<i style="left:73.8px;top:706.5px;width:49.0px;background:#cfb0e4"></i>
<i style="left:45.8px;top:712.5px;width:7.0px;background:#e2a8da"></i>
<i style="left:54.5px;top:712.5px;width:24.5px;background:#c6c6c6"></i>
<i style="left:82.5px;top:712.5px;width:8.8px;background:#e2a8da"></i>
<i style="left:94.8px;top:712.5px;width:7.0px;background:#c6c6c6"></i>
<i style="left:45.8px;top:718.6px;width:40.2px;background:#c6c6c6"></i>
<i style="left:40.5px;top:724.6px;width:1.8px;background:#c6c6c6"></i>
<i style="left:33.5px;top:730.6px;width:1.8px;background:#c6c6c6"></i>
<i style="left:31.8px;top:736.7px;width:1.8px;background:#c6c6c6"></i>
<i style="left:30.0px;top:748.7px;width:31.5px;background:#cfb0e4"></i>
<i style="left:63.2px;top:748.7px;width:49.0px;background:#a6c6e0"></i>
<i style="left:114.0px;top:748.7px;width:1.8px;background:#c6c6c6"></i>
<i style="left:31.8px;top:754.8px;width:17.5px;background:#cfb0e4"></i>
<i style="left:52.8px;top:754.8px;width:26.2px;background:#c6c6c6"></i>
<i style="left:82.5px;top:754.8px;width:1.8px;background:#c6c6c6"></i>
<i style="left:86.0px;top:754.8px;width:8.8px;background:#e2a8da"></i>
<i style="left:31.8px;top:760.8px;width:8.8px;background:#e2a8da"></i>
<i style="left:42.2px;top:760.8px;width:28.0px;background:#c6c6c6"></i>
<i style="left:72.0px;top:760.8px;width:1.8px;background:#c6c6c6"></i>
<i style="left:75.5px;top:760.8px;width:54.2px;background:#cfb0e4"></i>
<i style="left:133.2px;top:760.8px;width:1.8px;background:#c6c6c6"></i>
<i style="left:35.2px;top:766.8px;width:1.8px;background:#e2a8da"></i>
<i style="left:38.8px;top:766.8px;width:29.8px;background:#c6c6c6"></i>
<i style="left:70.2px;top:766.8px;width:64.8px;background:#cfb0e4"></i>
<i style="left:138.5px;top:766.8px;width:1.8px;background:#c6c6c6"></i>
<i style="left:38.8px;top:772.8px;width:10.5px;background:#e2a8da"></i>
<i style="left:52.8px;top:772.8px;width:29.8px;background:#cfb0e4"></i>
<i style="left:84.2px;top:772.8px;width:29.8px;background:#c6c6c6"></i>
<i style="left:37.0px;top:778.9px;width:1.8px;background:#c6c6c6"></i>
<i style="left:31.8px;top:784.9px;width:1.8px;background:#c6c6c6"></i>
<i style="left:31.8px;top:790.9px;width:17.5px;background:#e2a8da"></i>
<i style="left:31.8px;top:797.0px;width:1.8px;background:#c6c6c6"></i>
<i style="left:30.0px;top:809.0px;width:8.8px;background:#e2a8da"></i>
<i style="left:40.5px;top:809.0px;width:49.0px;background:#a6c6e0"></i>
<i style="left:93.0px;top:809.0px;width:1.8px;background:#c6c6c6"></i>
<i style="left:31.8px;top:815.1px;width:8.8px;background:#e2a8da"></i>
<i style="left:42.2px;top:815.1px;width:21.0px;background:#a9cbcf"></i>
<i style="left:65.0px;top:815.1px;width:56.0px;background:#a9cbcf"></i>
<i style="left:124.5px;top:815.1px;width:14.0px;background:#a9cbcf"></i>
<i style="left:138.5px;top:815.1px;width:8.8px;background:#e2a8da"></i>
<i style="left:31.8px;top:821.1px;width:8.8px;background:#e2a8da"></i>
<i style="left:42.2px;top:821.1px;width:71.8px;background:#a9cbcf"></i>
<i style="left:115.8px;top:821.1px;width:22.8px;background:#a9cbcf"></i>
<i style="left:138.5px;top:821.1px;width:8.8px;background:#e2a8da"></i>
<i style="left:150.8px;top:821.1px;width:19.2px;background:#a9cbcf"></i>
<i style="left:171.8px;top:821.1px;width:33.2px;background:#a9cbcf"></i>
<i style="left:205.0px;top:821.1px;width:8.8px;background:#e2a8da"></i>
<i style="left:213.8px;top:821.1px;width:19.2px;background:#a9cbcf"></i>
<i style="left:31.8px;top:827.1px;width:10.5px;background:#e2a8da"></i>
<i style="left:44.0px;top:827.1px;width:82.2px;background:#a9cbcf"></i>
<i style="left:128.0px;top:827.1px;width:36.8px;background:#a9cbcf"></i>
<i style="left:168.2px;top:827.1px;width:19.2px;background:#a9cbcf"></i>
<i style="left:187.5px;top:827.1px;width:8.8px;background:#e2a8da"></i>
<i style="left:31.8px;top:833.1px;width:1.8px;background:#c6c6c6"></i>
<i style="left:30.0px;top:845.2px;width:8.8px;background:#e2a8da"></i>
<i style="left:40.5px;top:845.2px;width:42.0px;background:#a6c6e0"></i>
<i style="left:84.2px;top:845.2px;width:1.8px;background:#c6c6c6"></i>
<i style="left:31.8px;top:851.2px;width:10.5px;background:#e2a8da"></i>
<i style="left:44.0px;top:851.2px;width:82.2px;background:#a9cbcf"></i>
<i style="left:128.0px;top:851.2px;width:36.8px;background:#a9cbcf"></i>
<i style="left:168.2px;top:851.2px;width:19.2px;background:#a9cbcf"></i>
<i style="left:187.5px;top:851.2px;width:8.8px;background:#e2a8da"></i>
<i style="left:31.8px;top:857.3px;width:1.8px;background:#c6c6c6"></i>
<i style="left:30.0px;top:869.3px;width:8.8px;background:#e2a8da"></i>
<i style="left:40.5px;top:869.3px;width:56.0px;background:#a6c6e0"></i>
<i style="left:96.5px;top:869.3px;width:8.8px;background:#cfb0e4"></i>
<i style="left:107.0px;top:869.3px;width:19.2px;background:#e2a8da"></i>
<i style="left:128.0px;top:869.3px;width:10.5px;background:#c6c6c6"></i>
<i style="left:140.2px;top:869.3px;width:1.8px;background:#c6c6c6"></i>
<i style="left:31.8px;top:875.3px;width:10.5px;background:#e2a8da"></i>
<i style="left:44.0px;top:875.3px;width:47.2px;background:#a9cbcf"></i>
<i style="left:94.8px;top:875.3px;width:31.5px;background:#a9cbcf"></i>
<i style="left:128.0px;top:875.3px;width:21.0px;background:#c6c6c6"></i>
<i style="left:31.8px;top:881.4px;width:1.8px;background:#c6c6c6"></i>
<i style="left:31.8px;top:906.7px;width:8.8px;background:#e2a8da"></i>
<i style="left:42.2px;top:906.7px;width:33.2px;background:#a9cbcf"></i>
<i style="left:77.2px;top:906.7px;width:1.8px;background:#c6c6c6"></i>
<i style="left:35.2px;top:912.7px;width:5.2px;background:#e2a8da"></i>
<i style="left:42.2px;top:912.7px;width:31.5px;background:#a9cbcf"></i>
<i style="left:73.8px;top:912.7px;width:5.2px;background:#aba5f0"></i>
<i style="left:31.8px;top:918.7px;width:1.8px;background:#c6c6c6"></i>
<i style="left:30.0px;top:924.7px;width:1.8px;background:#c6c6c6"></i>
<i style="left:30.0px;top:937.2px;width:10.5px;background:#e2a8da"></i>
<i style="left:42.2px;top:937.2px;width:26.2px;background:#a9cbcf"></i>
<i style="left:68.5px;top:937.2px;width:17.5px;background:#c6c6c6"></i>
<i style="left:87.8px;top:937.2px;width:17.5px;background:#c6c6c6"></i>
<i style="left:105.2px;top:937.2px;width:43.8px;background:#a6c6e0"></i>
<i style="left:149.0px;top:937.2px;width:7.0px;background:#cfb0e4"></i>
<i style="left:157.8px;top:937.2px;width:10.5px;background:#c6c6c6"></i>
<i style="left:170.0px;top:937.2px;width:1.8px;background:#c6c6c6"></i>
<i style="left:31.8px;top:943.2px;width:8.8px;background:#e2a8da"></i>
<i style="left:42.2px;top:943.2px;width:38.5px;background:#a9cbcf"></i>
<i style="left:84.2px;top:943.2px;width:1.8px;background:#c6c6c6"></i>
<i style="left:35.2px;top:949.2px;width:5.2px;background:#e2a8da"></i>
<i style="left:42.2px;top:949.2px;width:40.2px;background:#a9cbcf"></i>
<i style="left:82.5px;top:949.2px;width:15.8px;background:#f0a39c"></i>
<i style="left:100.0px;top:949.2px;width:31.5px;background:#cfb0e4"></i>
<i style="left:31.8px;top:955.2px;width:1.8px;background:#c6c6c6"></i>
<i style="left:30.0px;top:961.2px;width:1.8px;background:#c6c6c6"></i>
<i style="left:37.0px;top:991.2px;width:10.5px;background:#a6c6e0"></i>
<i style="left:47.5px;top:991.2px;width:17.5px;background:#cfb0e4"></i>
<i style="left:65.0px;top:991.2px;width:38.5px;background:#c6c6c6"></i>
<i style="left:107.0px;top:991.2px;width:28.0px;background:#a6c6e0"></i>
<i style="left:135.0px;top:991.2px;width:57.8px;background:#a9cbcf"></i>
<i style="left:196.2px;top:991.2px;width:26.2px;background:#c6c6c6"></i>
<i style="left:35.2px;top:997.0px;width:38.5px;background:#a9cbcf"></i>
<i style="left:75.5px;top:997.0px;width:15.8px;background:#c6c6c6"></i>
<i style="left:94.8px;top:997.0px;width:22.8px;background:#a9cbcf"></i>
<i style="left:117.5px;top:997.0px;width:24.5px;background:#cfb0e4"></i>
<i style="left:31.8px;top:1002.8px;width:1.8px;background:#c6c6c6"></i>
<i style="left:35.2px;top:1002.8px;width:8.8px;background:#e2a8da"></i>
<i style="left:44.0px;top:1002.8px;width:35.0px;background:#a9cbcf"></i>
<i style="left:80.8px;top:1002.8px;width:1.8px;background:#c6c6c6"></i>
<i style="left:37.0px;top:1009.0px;width:8.8px;background:#cfb0e4"></i>
<i style="left:47.5px;top:1009.0px;width:26.2px;background:#c6c6c6"></i>
<i style="left:75.5px;top:1009.0px;width:21.0px;background:#c6c6c6"></i>
<i style="left:98.2px;top:1009.0px;width:54.2px;background:#a9cbcf"></i>
<i style="left:152.5px;top:1009.0px;width:5.2px;background:#e2a8da"></i>
<i style="left:37.0px;top:1014.9px;width:19.2px;background:#cfb0e4"></i>
<i style="left:58.0px;top:1014.9px;width:36.8px;background:#c6c6c6"></i>
<i style="left:96.5px;top:1014.9px;width:36.8px;background:#cfb0e4"></i>
<i style="left:135.0px;top:1014.9px;width:54.2px;background:#cfb0e4"></i>
<i style="left:192.8px;top:1014.9px;width:29.8px;background:#cfb0e4"></i>
<i style="left:226.0px;top:1014.9px;width:19.2px;background:#e2a8da"></i>
<i style="left:37.0px;top:1021.2px;width:7.0px;background:#e2a8da"></i>
<i style="left:45.8px;top:1021.2px;width:68.2px;background:#a9cbcf"></i>
<i style="left:31.8px;top:1027.0px;width:1.8px;background:#c6c6c6"></i>
<i style="left:31.8px;top:1032.8px;width:8.8px;background:#e2a8da"></i>
<i style="left:42.2px;top:1032.8px;width:82.2px;background:#a9cbcf"></i>
<i style="left:30.0px;top:1039.0px;width:1.8px;background:#c6c6c6"></i>
<i style="left:30.0px;top:1051.2px;width:8.8px;background:#e2a8da"></i>
<i style="left:40.5px;top:1051.2px;width:42.0px;background:#a6c6e0"></i>
<i style="left:82.5px;top:1051.2px;width:22.8px;background:#c6c6c6"></i>
<i style="left:107.0px;top:1051.2px;width:24.5px;background:#c6c6c6"></i>
<i style="left:133.2px;top:1051.2px;width:36.8px;background:#a6c6e0"></i>
<i style="left:170.0px;top:1051.2px;width:10.5px;background:#e2a8da"></i>
<i style="left:180.5px;top:1051.2px;width:22.8px;background:#a9cbcf"></i>
<i style="left:205.0px;top:1051.2px;width:17.5px;background:#c6c6c6"></i>
<i style="left:35.2px;top:1057.0px;width:12.2px;background:#a6c6e0"></i>
<i style="left:47.5px;top:1057.0px;width:35.0px;background:#cfb0e4"></i>
<i style="left:82.5px;top:1057.0px;width:43.8px;background:#a9cbcf"></i>
<i style="left:128.0px;top:1057.0px;width:28.0px;background:#e2a8da"></i>
<i style="left:163.0px;top:1057.0px;width:15.8px;background:#e2a8da"></i>
<i style="left:182.2px;top:1057.0px;width:29.8px;background:#e2a8da"></i>
<i style="left:213.8px;top:1057.0px;width:1.8px;background:#c6c6c6"></i>
<i style="left:31.8px;top:1062.8px;width:8.8px;background:#e2a8da"></i>
<i style="left:42.2px;top:1062.8px;width:50.8px;background:#cfb0e4"></i>
<i style="left:30.0px;top:1069.0px;width:1.8px;background:#c6c6c6"></i>
<i style="left:30.0px;top:1081.2px;width:8.8px;background:#e2a8da"></i>
<i style="left:40.5px;top:1081.2px;width:42.0px;background:#a6c6e0"></i>
<i style="left:82.5px;top:1081.2px;width:22.8px;background:#c6c6c6"></i>
<i style="left:107.0px;top:1081.2px;width:24.5px;background:#c6c6c6"></i>
<i style="left:133.2px;top:1081.2px;width:36.8px;background:#a6c6e0"></i>
<i style="left:170.0px;top:1081.2px;width:24.5px;background:#a9cbcf"></i>
<i style="left:196.2px;top:1081.2px;width:15.8px;background:#c6c6c6"></i>
<i style="left:35.2px;top:1087.0px;width:29.8px;background:#a6c6e0"></i>
<i style="left:65.0px;top:1087.0px;width:29.8px;background:#cfb0e4"></i>
<i style="left:98.2px;top:1087.0px;width:1.8px;background:#c6c6c6"></i>
<i style="left:31.8px;top:1092.8px;width:7.0px;background:#e2a8da"></i>
<i style="left:42.2px;top:1092.8px;width:84.0px;background:#a9cbcf"></i>
<i style="left:128.0px;top:1092.8px;width:28.0px;background:#a9cbcf"></i>
<i style="left:161.2px;top:1092.8px;width:36.8px;background:#a9cbcf"></i>
<i style="left:30.0px;top:1099.0px;width:1.8px;background:#c6c6c6"></i>
<i style="left:30.0px;top:1110.7px;width:8.8px;background:#e2a8da"></i>
<i style="left:40.5px;top:1110.7px;width:42.0px;background:#a6c6e0"></i>
<i style="left:82.5px;top:1110.7px;width:22.8px;background:#c6c6c6"></i>
<i style="left:107.0px;top:1110.7px;width:24.5px;background:#c6c6c6"></i>
<i style="left:133.2px;top:1110.7px;width:71.8px;background:#a6c6e0"></i>
<i style="left:208.5px;top:1110.7px;width:14.0px;background:#c6c6c6"></i>
<i style="left:35.2px;top:1117.0px;width:29.8px;background:#a6c6e0"></i>
<i style="left:65.0px;top:1117.0px;width:29.8px;background:#cfb0e4"></i>
<i style="left:98.2px;top:1117.0px;width:1.8px;background:#c6c6c6"></i>
<i style="left:31.8px;top:1122.8px;width:7.0px;background:#e2a8da"></i>
<i style="left:42.2px;top:1122.8px;width:84.0px;background:#a9cbcf"></i>
<i style="left:128.0px;top:1122.8px;width:28.0px;background:#a9cbcf"></i>
<i style="left:161.2px;top:1122.8px;width:36.8px;background:#a9cbcf"></i>
<i style="left:30.0px;top:1128.6px;width:1.8px;background:#c6c6c6"></i>
<i style="left:30.0px;top:1141.2px;width:8.8px;background:#e2a8da"></i>
<i style="left:40.5px;top:1141.2px;width:42.0px;background:#a6c6e0"></i>
<i style="left:82.5px;top:1141.2px;width:22.8px;background:#c6c6c6"></i>
<i style="left:107.0px;top:1141.2px;width:24.5px;background:#c6c6c6"></i>
<i style="left:133.2px;top:1141.2px;width:36.8px;background:#a6c6e0"></i>
<i style="left:170.0px;top:1141.2px;width:10.5px;background:#e2a8da"></i>
<i style="left:180.5px;top:1141.2px;width:22.8px;background:#a9cbcf"></i>
<i style="left:205.0px;top:1141.2px;width:17.5px;background:#c6c6c6"></i>
<i style="left:224.2px;top:1141.2px;width:1.8px;background:#c6c6c6"></i>
<i style="left:31.8px;top:1147.0px;width:49.0px;background:#cbb3a8"></i>
<i style="left:30.0px;top:1152.8px;width:1.8px;background:#c6c6c6"></i>
<i style="left:31.8px;top:1182.8px;width:24.5px;background:#a9cbcf"></i>
<i style="left:58.0px;top:1182.8px;width:15.8px;background:#c6c6c6"></i>
<i style="left:77.2px;top:1182.8px;width:8.8px;background:#e2a8da"></i>
<i style="left:86.0px;top:1182.8px;width:33.2px;background:#a9cbcf"></i>
<i style="left:31.8px;top:1188.6px;width:22.8px;background:#a9cbcf"></i>
<i style="left:56.2px;top:1188.6px;width:15.8px;background:#c6c6c6"></i>
<i style="left:73.8px;top:1188.6px;width:8.8px;background:#e2a8da"></i>
<i style="left:82.5px;top:1188.6px;width:24.5px;background:#a9cbcf"></i>
<i style="left:110.5px;top:1188.6px;width:57.8px;background:#a9cbcf"></i>
<i style="left:31.8px;top:1194.5px;width:7.0px;background:#e2a8da"></i>
<i style="left:42.2px;top:1194.5px;width:57.8px;background:#a9cbcf"></i>
<i style="left:100.0px;top:1194.5px;width:10.5px;background:#e2a8da"></i>
<i style="left:110.5px;top:1194.5px;width:22.8px;background:#a9cbcf"></i>
<i style="left:135.0px;top:1194.5px;width:31.5px;background:#a9cbcf"></i>
<i style="left:168.2px;top:1194.5px;width:36.8px;background:#a9cbcf"></i>
<i style="left:30.0px;top:1200.7px;width:1.8px;background:#c6c6c6"></i>
<i style="left:30.0px;top:1212.8px;width:8.8px;background:#e2a8da"></i>
<i style="left:40.5px;top:1212.8px;width:59.5px;background:#a6c6e0"></i>
<i style="left:100.0px;top:1212.8px;width:49.0px;background:#a9cbcf"></i>
<i style="left:150.8px;top:1212.8px;width:19.2px;background:#c6c6c6"></i>
<i style="left:171.8px;top:1212.8px;width:1.8px;background:#c6c6c6"></i>
<i style="left:31.8px;top:1218.6px;width:24.5px;background:#a9cbcf"></i>
<i style="left:58.0px;top:1218.6px;width:15.8px;background:#c6c6c6"></i>
<i style="left:77.2px;top:1218.6px;width:8.8px;background:#e2a8da"></i>
<i style="left:86.0px;top:1218.6px;width:43.8px;background:#a9cbcf"></i>
<i style="left:31.8px;top:1224.5px;width:22.8px;background:#a9cbcf"></i>
<i style="left:56.2px;top:1224.5px;width:15.8px;background:#c6c6c6"></i>
<i style="left:73.8px;top:1224.5px;width:8.8px;background:#e2a8da"></i>
<i style="left:82.5px;top:1224.5px;width:24.5px;background:#a9cbcf"></i>
<i style="left:110.5px;top:1224.5px;width:57.8px;background:#a9cbcf"></i>
<i style="left:31.8px;top:1230.7px;width:7.0px;background:#e2a8da"></i>
<i style="left:42.2px;top:1230.7px;width:57.8px;background:#a9cbcf"></i>
<i style="left:100.0px;top:1230.7px;width:10.5px;background:#e2a8da"></i>
<i style="left:110.5px;top:1230.7px;width:22.8px;background:#a9cbcf"></i>
<i style="left:135.0px;top:1230.7px;width:31.5px;background:#a9cbcf"></i>
<i style="left:168.2px;top:1230.7px;width:36.8px;background:#a9cbcf"></i>
<i style="left:30.0px;top:1236.5px;width:1.8px;background:#c6c6c6"></i>
<i style="left:37.0px;top:1267.0px;width:22.8px;background:#a6c6e0"></i>
<i style="left:61.5px;top:1267.0px;width:17.5px;background:#e2a8da"></i>
<i style="left:82.5px;top:1267.0px;width:8.8px;background:#c6c6c6"></i>
<i style="left:93.0px;top:1267.0px;width:1.8px;background:#c6c6c6"></i>
<i style="left:31.8px;top:1272.8px;width:22.8px;background:#a9cbcf"></i>
<i style="left:56.2px;top:1272.8px;width:15.8px;background:#c6c6c6"></i>
<i style="left:73.8px;top:1272.8px;width:1.8px;background:#c6c6c6"></i>
<i style="left:77.2px;top:1272.8px;width:8.8px;background:#e2a8da"></i>
<i style="left:86.0px;top:1272.8px;width:40.2px;background:#a9cbcf"></i>
<i style="left:31.8px;top:1278.6px;width:49.0px;background:#cbb3a8"></i>
<i style="left:82.5px;top:1278.6px;width:7.0px;background:#e2a8da"></i>
<i style="left:31.8px;top:1290.7px;width:12.2px;background:#cfb0e4"></i>
<i style="left:45.8px;top:1290.7px;width:28.0px;background:#a9cbcf"></i>
<i style="left:75.5px;top:1290.7px;width:24.5px;background:#c6c6c6"></i>
<i style="left:101.8px;top:1290.7px;width:17.5px;background:#c6c6c6"></i>
<i style="left:122.8px;top:1290.7px;width:61.2px;background:#a6c6e0"></i>
<i style="left:185.8px;top:1290.7px;width:19.2px;background:#a9cbcf"></i>
<i style="left:31.8px;top:1296.5px;width:12.2px;background:#cfb0e4"></i>
<i style="left:45.8px;top:1296.5px;width:12.2px;background:#cfb0e4"></i>
<i style="left:58.0px;top:1296.5px;width:24.5px;background:#c6c6c6"></i>
<i style="left:86.0px;top:1296.5px;width:22.8px;background:#a9cbcf"></i>
<i style="left:112.2px;top:1296.5px;width:66.5px;background:#a9cbcf"></i>
<i style="left:182.2px;top:1296.5px;width:22.8px;background:#a9cbcf"></i>
<i style="left:31.8px;top:1302.8px;width:10.5px;background:#e2a8da"></i>
<i style="left:44.0px;top:1302.8px;width:26.2px;background:#f0a39c"></i>
<i style="left:72.0px;top:1302.8px;width:1.8px;background:#c6c6c6"></i>
<i style="left:75.5px;top:1302.8px;width:29.8px;background:#a9cbcf"></i>
<i style="left:30.0px;top:1308.6px;width:1.8px;background:#c6c6c6"></i>
<i style="left:30.0px;top:1320.7px;width:8.8px;background:#e2a8da"></i>
<i style="left:40.5px;top:1320.7px;width:56.0px;background:#a6c6e0"></i>
<i style="left:98.2px;top:1320.7px;width:24.5px;background:#cfb0e4"></i>
<i style="left:124.5px;top:1320.7px;width:17.5px;background:#e2a8da"></i>
<i style="left:143.8px;top:1320.7px;width:10.5px;background:#c6c6c6"></i>
<i style="left:156.0px;top:1320.7px;width:1.8px;background:#c6c6c6"></i>
<i style="left:33.5px;top:1326.5px;width:10.5px;background:#cfb0e4"></i>
<i style="left:45.8px;top:1326.5px;width:8.8px;background:#c6c6c6"></i>
<i style="left:31.8px;top:1332.8px;width:1.8px;background:#c6c6c6"></i>
<i style="left:35.2px;top:1332.8px;width:26.2px;background:#c6c6c6"></i>
<i style="left:63.2px;top:1332.8px;width:52.5px;background:#cfb0e4"></i>
<i style="left:117.5px;top:1332.8px;width:1.8px;background:#c6c6c6"></i>
<i style="left:35.2px;top:1338.6px;width:5.2px;background:#c6c6c6"></i>
<i style="left:42.2px;top:1338.6px;width:29.8px;background:#c6c6c6"></i>
<i style="left:73.8px;top:1338.6px;width:70.0px;background:#cfb0e4"></i>
<i style="left:31.8px;top:1344.5px;width:1.8px;background:#c6c6c6"></i>
<i style="left:35.2px;top:1344.5px;width:12.2px;background:#e2a8da"></i>
<i style="left:49.2px;top:1344.5px;width:26.2px;background:#c6c6c6"></i>
<i style="left:77.2px;top:1344.5px;width:61.2px;background:#cfb0e4"></i>
<i style="left:142.0px;top:1344.5px;width:1.8px;background:#c6c6c6"></i>
<i style="left:35.2px;top:1350.7px;width:5.2px;background:#c6c6c6"></i>
<i style="left:42.2px;top:1350.7px;width:38.5px;background:#cfb0e4"></i>
<i style="left:80.8px;top:1350.7px;width:57.8px;background:#cfb0e4"></i>
<i style="left:140.2px;top:1350.7px;width:15.8px;background:#cfb0e4"></i>
<i style="left:157.8px;top:1350.7px;width:22.8px;background:#cfb0e4"></i>
<i style="left:31.8px;top:1356.5px;width:1.8px;background:#c6c6c6"></i>
<i style="left:35.2px;top:1356.5px;width:7.0px;background:#e2a8da"></i>
<i style="left:44.0px;top:1356.5px;width:1.8px;background:#c6c6c6"></i>
<i style="left:37.0px;top:1362.4px;width:7.0px;background:#e2a8da"></i>
<i style="left:44.0px;top:1362.4px;width:50.8px;background:#f0a39c"></i>
<i style="left:35.2px;top:1368.2px;width:17.5px;background:#e2a8da"></i>
<i style="left:31.8px;top:1374.5px;width:1.8px;background:#c6c6c6"></i>
<i style="left:31.8px;top:1386.5px;width:22.8px;background:#a9cbcf"></i>
<i style="left:56.2px;top:1386.5px;width:15.8px;background:#c6c6c6"></i>
<i style="left:73.8px;top:1386.5px;width:1.8px;background:#c6c6c6"></i>
<i style="left:77.2px;top:1386.5px;width:8.8px;background:#e2a8da"></i>
<i style="left:86.0px;top:1386.5px;width:40.2px;background:#a9cbcf"></i>
<i style="left:31.8px;top:1392.4px;width:49.0px;background:#cbb3a8"></i>
<i style="left:82.5px;top:1392.4px;width:3.5px;background:#e2a8da"></i>
<i style="left:31.8px;top:1398.2px;width:35.0px;background:#a9cbcf"></i>
<i style="left:68.5px;top:1398.2px;width:31.5px;background:#c6c6c6"></i>
<i style="left:105.2px;top:1398.2px;width:47.2px;background:#a9cbcf"></i>
<i style="left:152.5px;top:1398.2px;width:21.0px;background:#cfb0e4"></i>
<i style="left:31.8px;top:1410.2px;width:5.2px;background:#e2a8da"></i>
<i style="left:38.8px;top:1410.2px;width:19.2px;background:#c6c6c6"></i>
<i style="left:59.8px;top:1410.2px;width:1.8px;background:#c6c6c6"></i>
<i style="left:31.8px;top:1416.5px;width:1.8px;background:#c6c6c6"></i>
<i style="left:35.2px;top:1416.5px;width:10.5px;background:#c6c6c6"></i>
<i style="left:35.2px;top:1422.4px;width:43.8px;background:#c6c6c6"></i>
<i style="left:82.5px;top:1422.4px;width:31.5px;background:#c6c6c6"></i>
<i style="left:115.8px;top:1422.4px;width:49.0px;background:#a9cbcf"></i>
<i style="left:166.5px;top:1422.4px;width:59.5px;background:#a9cbcf"></i>
<i style="left:227.8px;top:1422.4px;width:1.8px;background:#c6c6c6"></i>
<i style="left:231.2px;top:1422.4px;width:21.0px;background:#a9cbcf"></i>
<i style="left:35.2px;top:1428.2px;width:5.2px;background:#c6c6c6"></i>
<i style="left:40.5px;top:1428.2px;width:19.2px;background:#c6c6c6"></i>
<i style="left:61.5px;top:1428.2px;width:1.8px;background:#c6c6c6"></i>
<i style="left:40.5px;top:1434.5px;width:5.2px;background:#c6c6c6"></i>
<i style="left:47.5px;top:1434.5px;width:24.5px;background:#c6c6c6"></i>
<i style="left:73.8px;top:1434.5px;width:47.2px;background:#a9cbcf"></i>
<i style="left:122.8px;top:1434.5px;width:21.0px;background:#e2a8da"></i>
<i style="left:35.2px;top:1440.2px;width:1.8px;background:#c6c6c6"></i>
<i style="left:31.8px;top:1446.2px;width:1.8px;background:#c6c6c6"></i>
<i style="left:31.8px;top:1458.2px;width:1.8px;background:#c6c6c6"></i>
<i style="left:35.2px;top:1458.2px;width:21.0px;background:#c6c6c6"></i>
<i style="left:61.5px;top:1458.2px;width:1.8px;background:#c6c6c6"></i>
<i style="left:35.2px;top:1464.0px;width:12.2px;background:#e2a8da"></i>
<i style="left:47.5px;top:1464.0px;width:49.0px;background:#f0a39c"></i>
<i style="left:31.8px;top:1470.2px;width:1.8px;background:#c6c6c6"></i>
<i style="left:31.8px;top:1482.2px;width:8.8px;background:#e2a8da"></i>
<i style="left:44.0px;top:1482.2px;width:14.0px;background:#c6c6c6"></i>
<i style="left:30.0px;top:1500.7px;width:8.8px;background:#e2a8da"></i>
<i style="left:40.5px;top:1500.7px;width:42.0px;background:#a6c6e0"></i>
<i style="left:82.5px;top:1500.7px;width:19.2px;background:#cfb0e4"></i>
<i style="left:103.5px;top:1500.7px;width:26.2px;background:#c6c6c6"></i>
<i style="left:131.5px;top:1500.7px;width:1.8px;background:#c6c6c6"></i>
<i style="left:31.8px;top:1507.0px;width:22.8px;background:#a9cbcf"></i>
<i style="left:56.2px;top:1507.0px;width:15.8px;background:#c6c6c6"></i>
<i style="left:73.8px;top:1507.0px;width:1.8px;background:#c6c6c6"></i>
<i style="left:77.2px;top:1507.0px;width:8.8px;background:#e2a8da"></i>
<i style="left:86.0px;top:1507.0px;width:40.2px;background:#a9cbcf"></i>
<i style="left:31.8px;top:1512.8px;width:49.0px;background:#cbb3a8"></i>
<i style="left:82.5px;top:1512.8px;width:3.5px;background:#e2a8da"></i>
<i style="left:31.8px;top:1518.6px;width:5.2px;background:#e2a8da"></i>
<i style="left:40.5px;top:1518.6px;width:14.0px;background:#c6c6c6"></i>
<i style="left:58.0px;top:1518.6px;width:1.8px;background:#c6c6c6"></i>
<i style="left:31.8px;top:1530.7px;width:50.8px;background:#cfb0e4"></i>
<i style="left:82.5px;top:1530.7px;width:70.0px;background:#c6c6c6"></i>
<i style="left:152.5px;top:1530.7px;width:70.0px;background:#a9cbcf"></i>
<div class="abs" style="left:2px;top:884.0px;width:278px;height:1.5px;background:#e2e2e2"></div>
<div class="abs" style="left:2px;top:968.0px;width:278px;height:1.5px;background:#e2e2e2"></div>
<div class="abs" style="left:2px;top:1159.6px;width:278px;height:1.5px;background:#e2e2e2"></div>
<div class="abs" style="left:2px;top:1243.8px;width:278px;height:1.5px;background:#e2e2e2"></div>
<div class="abs" style="left:2px;top:300.0px;width:16px;height:4px;background:#0a74f0"></div>
<div class="abs" style="left:2px;top:450.0px;width:16px;height:4px;background:#0a74f0"></div>
<div class="abs" style="left:2px;top:480.0px;width:16px;height:4px;background:#0a74f0"></div>
<div class="abs" style="left:2px;top:810.0px;width:16px;height:4px;background:#0a74f0"></div>
<div class="abs" style="left:2px;top:890.0px;width:16px;height:4px;background:#0a74f0"></div>
<div class="abs" style="left:2px;top:919.0px;width:16px;height:4px;background:#0a74f0"></div>
<div class="abs" style="left:2px;top:1063.0px;width:16px;height:4px;background:#0a74f0"></div>
</div>
<svg style="left:0;top:0" width="3024" height="1780" viewBox="112 76 3024 1780">
<!-- traffic lights -->
<circle cx="150" cy="114" r="11.6" fill="#ff5f57" stroke="#e2463f" stroke-width="0.8"/>
<circle cx="190" cy="114" r="11.6" fill="#febc2e" stroke="#e1a116" stroke-width="0.8"/>
<circle cx="230" cy="114" r="11.6" fill="#28c840" stroke="#1aab29" stroke-width="0.8"/>
<!-- sidebar toggle -->
<g fill="none" stroke="#5d5956" stroke-width="2.6">
<rect x="288.3" y="99.3" width="36" height="27.4" rx="5.5"/>
<line x1="300.5" y1="99.3" x2="300.5" y2="126.7"/>
</g>
<g stroke="#5d5956" stroke-width="1.8"><line x1="292" y1="106" x2="297" y2="106"/><line x1="292" y1="110" x2="297" y2="110"/><line x1="292" y1="114" x2="297" y2="114"/></g>
<!-- play -->
<path d="M671.5 102.5 Q670 101 670 103 L670 125.5 Q670 128 672.2 126.7 L694.5 115.6 Q696.5 114.2 694.5 112.8 Z" fill="#5a5653"/>
<!-- branch icon -->
<g fill="#5d5956"><circle cx="762" cy="103.5" r="4"/><circle cx="762" cy="125.8" r="4"/><circle cx="781" cy="105" r="4"/></g>
<path d="M762 103.5 L762 125.8 M762 118 Q762 113 768 113 L774 113 Q781 113 781 106" fill="none" stroke="#5d5956" stroke-width="2.6"/>
<!-- scheme box -->
<rect x="1341" y="92" width="1193" height="43.5" rx="11" fill="#efebe8"/>
<rect x="1356" y="100" width="28" height="27.8" rx="6.5" fill="#1b8db1"/>
<g fill="#fff" transform="translate(1370 114)">
<path d="M0 1 C-2 -3 -4 -7 -2 -10 C0 -12 3 -11 3 -8 C3 -5 1 -2 0 1Z"/>
<path d="M0 1 C3 -1 7 -2 9 1 C10 4 7 6 5 5 C3 4 1 3 0 1Z"/>
<path d="M0 1 C-1 4 -3 7 -7 8 C-10 8 -10 4 -8 3 C-5 1 -3 1 0 1Z"/>
</g>
<path d="M1487.5 105.5 L1492 114.5 L1487.5 123.5" fill="none" stroke="#6f6b68" stroke-width="2"/>
<rect x="1517" y="103.5" width="13.4" height="21.5" rx="3" fill="#d6d3d0" stroke="#6e6a67" stroke-width="1.8"/>
<line x1="1521.5" y1="106.3" x2="1526" y2="106.3" stroke="#6e6a67" stroke-width="1.3"/>
<line x1="1521.5" y1="122.2" x2="1526" y2="122.2" stroke="#6e6a67" stroke-width="1.3"/>
<!-- warnings -->
<path d="M2572 103.5 Q2572.5 103 2573 104 L2582.3 121.5 Q2583 124 2580.5 124 L2563.5 124 Q2561 124 2561.8 121.5 Z" fill="#9227e8"/>
<rect x="2570.7" y="108.5" width="2.8" height="8.8" rx="1.2" fill="#fff"/><circle cx="2572.1" cy="120.2" r="1.5" fill="#fff"/>
<path d="M2637.8 103.5 Q2638.3 103 2638.8 104 L2648.1 121.5 Q2648.8 124 2646.3 124 L2629.3 124 Q2626.8 124 2627.6 121.5 Z" fill="#fdb700"/>
<rect x="2636.5" y="108.5" width="2.8" height="8.8" rx="1.2" fill="#fff"/><circle cx="2637.9" cy="120.2" r="1.5" fill="#fff"/>
<!-- cloud -->
<path d="M2735 125 Q2728.5 125 2728.5 118.5 Q2728.5 112.5 2734.5 111.8 Q2736 104.5 2744 104.5 Q2750 104.5 2752.5 109 Q2759.5 109.5 2759.5 117 Q2759.5 125 2752 125 Z" fill="#6e6b69"/>
<circle cx="2753.5" cy="112.5" r="6.8" fill="#fbf8f5"/><circle cx="2753.5" cy="112.5" r="5.3" fill="#0a7cf6"/>
<!-- plus -->
<path d="M2994.5 102.5 V125.5 M2983 114 H3006" stroke="#5d5956" stroke-width="2.4" fill="none"/>
<!-- right sidebar toggle -->
<g fill="none" stroke="#5d5956" stroke-width="2.6"><rect x="3068.8" y="99.8" width="35" height="27" rx="5.5"/><line x1="3091.7" y1="99.8" x2="3091.7" y2="126.8"/></g>
<g stroke="#5d5956" stroke-width="1.8"><line x1="3095.5" y1="106" x2="3100" y2="106"/><line x1="3095.5" y1="110" x2="3100" y2="110"/><line x1="3095.5" y1="114" x2="3100" y2="114"/></g>

<!-- navigator icons -->
<path d="M169.5 173 Q169.5 169.5 173 169.5 L180 169.5 L183 172 L191.5 172 Q195 172 195 175.5 L195 190.5 Q195 194 191.5 194 L173 194 Q169.5 194 169.5 190.5 Z" fill="#1a7cf5"/>
<line x1="169.5" y1="176.5" x2="195" y2="176.5" stroke="#e8e5e2" stroke-width="1.3"/>
<g fill="none" stroke="#6a6663" stroke-width="2">
<rect x="230" y="169.5" width="24.5" height="24.5" rx="1.5"/>
<path d="M234.5 174 L239 178.5 M250 174 L245.5 178.5 M234.5 189.5 L239 185 M250 189.5 L245.5 185"/>
</g>
<circle cx="242.3" cy="181.8" r="2.5" fill="#6a6663"/>
<path d="M294 169.8 L310.5 169.8 L310.5 194 L302.2 187.5 L294 194 Z" fill="none" stroke="#6a6663" stroke-width="2" stroke-linejoin="round"/>
<circle cx="359" cy="178.5" r="8.2" fill="none" stroke="#6a6663" stroke-width="2"/>
<line x1="365" y1="184.5" x2="373" y2="192.5" stroke="#6a6663" stroke-width="2.6" stroke-linecap="round"/>
<path d="M420.3 170.2 Q422 167.6 423.7 170.2 L433.3 188 Q434.6 191.2 431.2 191.2 L412.8 191.2 Q409.4 191.2 410.7 188 Z" fill="none" stroke="#6a6663" stroke-width="2.1" stroke-linejoin="round"/>
<path d="M422 175.5 L422 183.8" stroke="#6a6663" stroke-width="2.6" stroke-linecap="round"/><circle cx="422" cy="187.3" r="1.45" fill="#6a6663"/>
<path d="M480.6 169.5 Q482 168.2 483.4 169.5 L493.4 179.6 Q494.8 181 493.4 182.4 L483.4 192.5 Q482 193.8 480.6 192.5 L470.6 182.4 Q469.2 181 470.6 179.6 Z" fill="none" stroke="#6a6663" stroke-width="2.1" stroke-linejoin="round"/>
<path d="M477.6 181.5 L481 184.6 L486.8 178" fill="none" stroke="#6a6663" stroke-width="2.1" stroke-linecap="round" stroke-linejoin="round"/>
<g transform="translate(537 183) rotate(15)" fill="none" stroke="#6a6663" stroke-width="2">
<path d="M-6.3 -0.5 Q-6.3 -4.8 -2.8 -4.8 L2.8 -4.8 Q6.3 -4.8 6.3 -0.5 L6.3 9 Q6.3 11 4.3 11 L-4.3 11 Q-6.3 11 -6.3 9 Z"/>
<rect x="-2.6" y="-11.3" width="5.2" height="6.5"/>
<path d="M-2.3 1.8 L2.3 6.4 M2.3 1.8 L-2.3 6.4" stroke-width="1.7"/>
</g>
<g fill="#8a8683"><circle cx="545.5" cy="172.5" r="0.95"/><circle cx="549.6" cy="170.5" r="0.95"/><circle cx="553.9" cy="168.6" r="0.95"/><circle cx="547.9" cy="176.5" r="0.95"/><circle cx="552" cy="174.6" r="0.95"/><circle cx="556" cy="175" r="0.95"/><circle cx="550" cy="180.2" r="0.95"/><circle cx="554" cy="178.8" r="0.95"/><circle cx="552.2" cy="184.5" r="0.95"/><circle cx="556.3" cy="182.7" r="0.95"/></g>
<path d="M591 172.5 L607.5 172.5 Q610 172.5 611.8 174.5 L615.5 179 Q616.5 181 615.5 182.5 L611.8 187 Q610 189.5 607.5 189.5 L591 189.5 Q587 189.5 587 185.5 L587 176.5 Q587 172.5 591 172.5 Z" fill="none" stroke="#6a6663" stroke-width="2"/>
<rect x="651.8" y="169.2" width="20.8" height="24" rx="2.5" fill="none" stroke="#6a6663" stroke-width="2.1"/>
<g stroke="#6a6663" stroke-width="1.8"><line x1="655.2" y1="175" x2="657.2" y2="175"/><line x1="660" y1="175" x2="669.5" y2="175"/><line x1="655.2" y1="181" x2="657.2" y2="181"/><line x1="660" y1="181" x2="669.5" y2="181"/><line x1="655.2" y1="187" x2="657.2" y2="187"/><line x1="660" y1="187" x2="669.5" y2="187"/></g>

<!-- sidebar tree -->
<path d="M141 248.5 L148 255.5 L155 248.5" fill="none" stroke="#5d5956" stroke-width="2.4"/>
<rect x="166.8" y="236.8" width="29.8" height="30" rx="7" fill="#1a84ff"/>
<rect x="169.6" y="239.6" width="24.2" height="24.4" rx="4.8" fill="none" stroke="#bfe0ff" stroke-width="1.4"/>
<path d="M180.2 243.8 L189.2 259.5 M183.3 243.8 L177.4 253.3 M172.4 255.2 L191 255.2" stroke="#e9f3ff" stroke-width="1.9" fill="none" stroke-linecap="round"/>
<circle cx="175" cy="258.8" r="1.2" fill="#e9f3ff"/>
<path d="M169 292.5 L176 299.5 L183 292.5" fill="none" stroke="#5d5956" stroke-width="2.4"/>
<path d="M195 287 Q195 284.5 197.5 284.5 L205 284.5 L208 287 L221.5 287 Q224 287 224 289.5 L224 305.5 Q224 308 221.5 308 L197.5 308 Q195 308 195 305.5 Z" fill="#7c7f7e"/>
<line x1="195" y1="291.5" x2="224" y2="291.5" stroke="#e8e5e2" stroke-width="1.2"/>
<path d="M198.5 301 L203.5 305 L198.5 305 Z" fill="#e8e5e2"/>
<path d="M197 336.5 L204 343.5 L211 336.5" fill="none" stroke="#5d5956" stroke-width="2.4"/>
<path d="M223 331 Q223 328.5 225.5 328.5 L233 328.5 L236 331 L249.5 331 Q252 331 252 333.5 L252 349.5 Q252 352 249.5 352 L225.5 352 Q223 352 223 349.5 Z" fill="#7c7f7e"/>
<line x1="223" y1="335.5" x2="252" y2="335.5" stroke="#e8e5e2" stroke-width="1.2"/>

<!-- tab bar -->
<g fill="none" stroke="#777" stroke-width="2">
<rect x="756" y="169" width="9.5" height="9.5"/><rect x="770.5" y="169" width="9.5" height="9.5"/>
<rect x="756" y="183" width="9.5" height="9.5"/><rect x="770.5" y="183" width="9.5" height="9.5"/>
<path d="M765.5 173.7 H770.5 M775.2 178.5 V183 M765.5 187.7 H770.5" stroke-width="1.6"/>
</g>
<line x1="800" y1="170" x2="800" y2="192.5" stroke="#e3e3e3" stroke-width="1.5"/>
<path d="M832.5 168 L818 181 L832.5 194.5" fill="none" stroke="#6b6b6b" stroke-width="2.2"/>
<path d="M857.5 168 L872 181 L857.5 194.5" fill="none" stroke="#b8b8b8" stroke-width="2.2"/>
<line x1="933.8" y1="170" x2="933.8" y2="192.5" stroke="#e3e3e3" stroke-width="1.5"/>
<line x1="1326.7" y1="170" x2="1326.7" y2="192.5" stroke="#e3e3e3" stroke-width="1.5"/>
<line x1="1768.5" y1="170" x2="1768.5" y2="192.5" stroke="#e3e3e3" stroke-width="1.5"/>
<line x1="2161" y1="170" x2="2161" y2="192.5" stroke="#e3e3e3" stroke-width="1.5"/>
<path d="M2786.5 170 L2799 170 L2806 177 L2806 193 L2786.5 193 Z M2799 170 L2799 177 L2806 177" fill="none" stroke="#777" stroke-width="1.8" stroke-linejoin="round"/>
<line x1="2955" y1="170" x2="2955" y2="192.5" stroke="#e3e3e3" stroke-width="1.5"/>
<path d="M2976 174.5 L2995.5 174.5 M2990 168.8 L2995.5 174.5 L2990 180 M2993 187 L2973.5 187 M2979 181.3 L2973.5 187 L2979 192.7" fill="none" stroke="#777" stroke-width="1.8"/>
<g stroke="#777" stroke-width="1.8"><line x1="3018" y1="169" x2="3030" y2="169"/><line x1="3018" y1="175" x2="3034" y2="175"/><line x1="3018" y1="181" x2="3030" y2="181"/><line x1="3018" y1="187" x2="3034" y2="187"/><line x1="3018" y1="193" x2="3034" y2="193"/></g>
<rect x="3038.5" y="169" width="14.5" height="24" fill="none" stroke="#777" stroke-width="1.8"/>
<rect x="3042.5" y="173" width="6.5" height="16" fill="none" stroke="#777" stroke-width="1.5"/>
<line x1="3073" y1="170" x2="3073" y2="192.5" stroke="#e3e3e3" stroke-width="1.5"/>
<rect x="3093" y="169" width="24.5" height="24.5" rx="4.5" fill="none" stroke="#777" stroke-width="1.8"/>
<line x1="3101" y1="169" x2="3101" y2="193.5" stroke="#777" stroke-width="1.8"/>
<path d="M3108.7 176.5 V186.5 M3103.7 181.5 H3113.7" stroke="#777" stroke-width="1.8"/>

<!-- jump bar -->
<rect x="754.3" y="224" width="24.6" height="24.5" rx="5.5" fill="#1a84ff"/>
<rect x="756.6" y="226.3" width="20" height="20" rx="3.8" fill="none" stroke="#bfe0ff" stroke-width="1.2"/>
<path d="M765.2 229.6 L772.6 242.5 M767.7 229.6 L762.9 237.4 M758.7 239 L774.1 239" stroke="#e9f3ff" stroke-width="1.6" fill="none" stroke-linecap="round"/>
<circle cx="760.9" cy="242" r="1" fill="#e9f3ff"/>
<g fill="none" stroke="#7b7b7b" stroke-width="1.8">
<path d="M856.5 228 L861.5 237 L856.5 246"/><path d="M1128.5 228 L1133.5 237 L1128.5 246"/>
<path d="M1425.5 228 L1430.5 237 L1425.5 246"/><path d="M1689.5 228 L1694.5 237 L1689.5 246"/>
</g>
<path d="M881 228.5 Q881 226.5 883 226.5 L889.5 226.5 L892 228.5 L903 228.5 Q905 228.5 905 230.5 L905 243.5 Q905 245.5 903 245.5 L883 245.5 Q881 245.5 881 243.5 Z" fill="#9b9b9b"/>
<line x1="881" y1="232" x2="905" y2="232" stroke="#fff" stroke-width="1"/>
<path d="M884 238.5 L888 242.5 L884 242.5 Z" fill="#fff"/>
<path d="M1151 228.5 Q1151 226.5 1153 226.5 L1159.5 226.5 L1162 228.5 L1173.5 228.5 Q1175.5 228.5 1175.5 230.5 L1175.5 243.5 Q1175.5 245.5 1173.5 245.5 L1153 245.5 Q1151 245.5 1151 243.5 Z" fill="#9b9b9b"/>
<line x1="1151" y1="232" x2="1175.5" y2="232" stroke="#fff" stroke-width="1"/>
<path d="M3058.5 228 L3047 237 L3058.5 246.5" fill="none" stroke="#777" stroke-width="1.9"/>
<path d="M3105.5 228 L3117 237 L3105.5 246.5" fill="none" stroke="#777" stroke-width="1.9"/>
<path d="M3081.5 227.3 Q3082 226.7 3082.5 227.5 L3092 244 Q3092.7 246.7 3090 246.7 L3074 246.7 Q3071.3 246.7 3072 244 Z" fill="#9227e8"/>
<rect x="3080.3" y="231.5" width="2.6" height="8" rx="1.1" fill="#fff"/><circle cx="3081.6" cy="242.6" r="1.4" fill="#fff"/>

<!-- selection row -->
<!-- bottom filter bar -->
<path d="M146.3 1818 V1839.5 M135.5 1828.7 H157" stroke="#5d5956" stroke-width="2.2"/>
<rect x="169" y="1806.8" width="555" height="42" rx="12" fill="#fff" stroke="#cfccc9" stroke-width="1.2"/>
<rect x="177" y="1815" width="51.5" height="25.8" rx="12.9" fill="#1a7cf5"/>
<g stroke="#fff" stroke-width="1.8"><line x1="187" y1="1823" x2="199" y2="1823"/><line x1="189.5" y1="1827.5" x2="196.5" y2="1827.5"/><line x1="191.5" y1="1832" x2="194.5" y2="1832"/></g>
<path d="M208 1825.5 L213 1830.5 L218 1825.5" fill="none" stroke="#fff" stroke-width="2"/>
<rect x="240" y="1813.4" width="272.7" height="29.4" rx="3.5" fill="#e6e5e5"/>
<path d="M240 1816.9 Q240 1813.4 243.5 1813.4 L264 1813.4 L264 1842.8 L243.5 1842.8 Q240 1842.8 240 1839.3 Z" fill="#d6d5d5"/>
<path d="M247.5 1825.5 L252 1830 L256.5 1825.5" fill="none" stroke="#3d3d3d" stroke-width="2.1"/>
<circle cx="635.7" cy="1828" r="8.7" fill="#8a8a8a"/>
<path d="M632.2 1824.5 L639.2 1831.5 M639.2 1824.5 L632.2 1831.5" stroke="#fff" stroke-width="1.8"/>
<circle cx="665.8" cy="1828" r="12" fill="none" stroke="#6e6e6e" stroke-width="1.8"/>
<path d="M665.8 1820 V1828.5 H659.5" fill="none" stroke="#6e6e6e" stroke-width="1.8"/>
<rect x="688" y="1815.5" width="24" height="25" rx="1.5" fill="none" stroke="#6e6e6e" stroke-width="1.8"/>
<path d="M692 1828 H699 M695.5 1824.5 V1831.5 M702 1828 H708" stroke="#6e6e6e" stroke-width="1.6"/>

<!-- editor bottom bar -->
<path d="M764 1820 L783 1820 Q786 1820 788 1822.5 L790.5 1826 Q792 1829 790.5 1832 L788 1835.5 Q786 1838 783 1838 L764 1838 Q760 1838 760 1834 L760 1824 Q760 1820 764 1820 Z" fill="#1a7cf5"/>
<line x1="3067" y1="1814" x2="3067" y2="1843" stroke="#e0e0e0" stroke-width="1.5"/>
<rect x="3086.5" y="1817.5" width="24" height="23.5" rx="4.5" fill="none" stroke="#777" stroke-width="1.9"/>
<rect x="3090.2" y="1832" width="16.8" height="5.5" rx="2" fill="#7a7a7a"/>
</svg>

<div class="t" id="tx0" style="left:691.0px;top:9.6px;font-size:26px;color:#3b3735;font-weight:700;letter-spacing:0.559px">Catalog</div>
<div class="t" id="tx1" style="left:691.0px;top:40.5px;font-size:23px;color:#7a7673;font-weight:400;letter-spacing:0.673px">erhard/rn-android-formfilling-fix</div>
<div class="t" id="tx2" style="left:1282.0px;top:27.4px;font-size:24px;color:#4a4644;font-weight:400;letter-spacing:-0.672px">Catalog</div>
<div class="t" id="tx3" style="left:1436.0px;top:27.4px;font-size:24px;color:#4a4644;font-weight:400;letter-spacing:-0.512px">iPhone 15</div>
<div class="t" id="tx4" style="left:2004.0px;top:26.2px;font-size:24px;color:#4a4644;font-weight:400;letter-spacing:-0.305px">Finished running Catalog on iPhone 15</div>
<div class="t" id="tx5" style="left:2477.0px;top:28.1px;font-size:20px;color:#6b6764;font-weight:700;letter-spacing:0.000px">1</div>
<div class="t" id="tx6" style="left:2543.0px;top:28.1px;font-size:20px;color:#6b6764;font-weight:700;letter-spacing:0.000px">2</div>
<div class="t" id="tx7" style="left:906.0px;top:93.1px;font-size:24px;color:#262626;font-weight:400;letter-spacing:-0.946px">RCTConvert…tionChange</div>
<div class="t" id="tx8" style="left:1297.5px;top:93.1px;font-size:24px;color:#262626;font-weight:400;letter-spacing:-0.615px">RCTConvert+…arConfiguration</div>
<div class="t" id="tx9" style="left:1740.8px;top:93.1px;font-size:24px;color:#262626;font-weight:400;letter-spacing:-0.688px">RCTConvert…nfiguration</div>
<div class="t" id="tx10" style="left:2132.0px;top:93.1px;font-size:24px;color:#262626;font-weight:400;letter-spacing:-0.478px">AppDelegate</div>
<div class="t" id="tx11" style="left:2391.0px;top:93.1px;font-size:24px;color:#1d6fe3;font-weight:400;letter-spacing:-1.281px">RCTPSPDFKitView</div>
<div class="t" id="tx12" style="left:2706.7px;top:93.1px;font-size:24px;color:#262626;font-weight:400;letter-spacing:-0.468px">No Editor</div>
<div class="t" id="tx13" style="left:678.4px;top:150.0px;font-size:23px;color:#262626;font-weight:400;letter-spacing:-0.479px">Pods</div>
<div class="t" id="tx14" style="left:805.0px;top:150.0px;font-size:23px;color:#262626;font-weight:400;letter-spacing:0.010px">Development Pods</div>
<div class="t" id="tx15" style="left:1074.0px;top:150.0px;font-size:23px;color:#262626;font-weight:400;letter-spacing:0.770px">react-native-pspdfkit</div>
<div class="t" id="tx16" style="left:1370.0px;top:150.0px;font-size:23px;color:#262626;font-weight:400;letter-spacing:-0.610px">RCTPSPDFKitView</div>
<div class="t" id="tx17" style="left:1596.8px;top:150.0px;font-size:23px;color:#262626;font-weight:400;letter-spacing:0.162px">No Selection</div>
<div class="t" id="tx18" style="left:95.3px;top:165.8px;font-size:25px;color:#262626;font-weight:400;letter-spacing:0.672px">Pods</div>
<div class="t" id="tx19" style="left:123.5px;top:209.8px;font-size:25px;color:#262626;font-weight:400;letter-spacing:0.944px">Development Pods</div>
<div class="t" id="tx20" style="left:151.5px;top:253.6px;font-size:25px;color:#262626;font-weight:400;letter-spacing:1.565px">react-native-pspdfkit</div>
<div class="t" id="tx21" style="left:179.5px;top:297.8px;font-size:25px;color:#262626;font-weight:400;letter-spacing:0.333px">RCTPSPDFKitView</div>
<div class="t" id="tx22" style="left:159.3px;top:1739.0px;font-size:24px;color:#262626;font-weight:400;letter-spacing:-0.093px">RCTPSPDFKitView.m</div>
<div class="t" id="tx23" style="left:2773.5px;top:1743.0px;font-size:23px;color:#7b7b7b;font-weight:400;letter-spacing:0.239px;-webkit-text-stroke:0.35px #7b7b7b">Line: 20  Col: 1</div>
<div class="t" id="tx24" style="left:2774.0px;top:1075.6px;font-size:17.5px;color:#6a6a6a;font-weight:400;letter-spacing:-0.008px;-webkit-text-stroke:0.45px #6a6a6a">PSPDFDocumentDelegate</div>
<div class="t" id="tx25" style="left:2774.5px;top:1160.0px;font-size:17.5px;color:#6a6a6a;font-weight:400;letter-spacing:-0.140px;-webkit-text-stroke:0.45px #6a6a6a">PSPDFViewC…ollerDelegate</div>
<div class="t" id="tx26" style="left:2774.0px;top:1351.7px;font-size:17.5px;color:#6a6a6a;font-weight:400;letter-spacing:-0.096px;-webkit-text-stroke:0.45px #6a6a6a">PSPDFFlexibl…ainerDelegate</div>
<div class="t" id="tx27" style="left:2774.0px;top:1435.0px;font-size:17.5px;color:#6a6a6a;font-weight:400;letter-spacing:0.147px;-webkit-text-stroke:0.45px #6a6a6a">Instant JSON</div>
</div>
</body></html>
